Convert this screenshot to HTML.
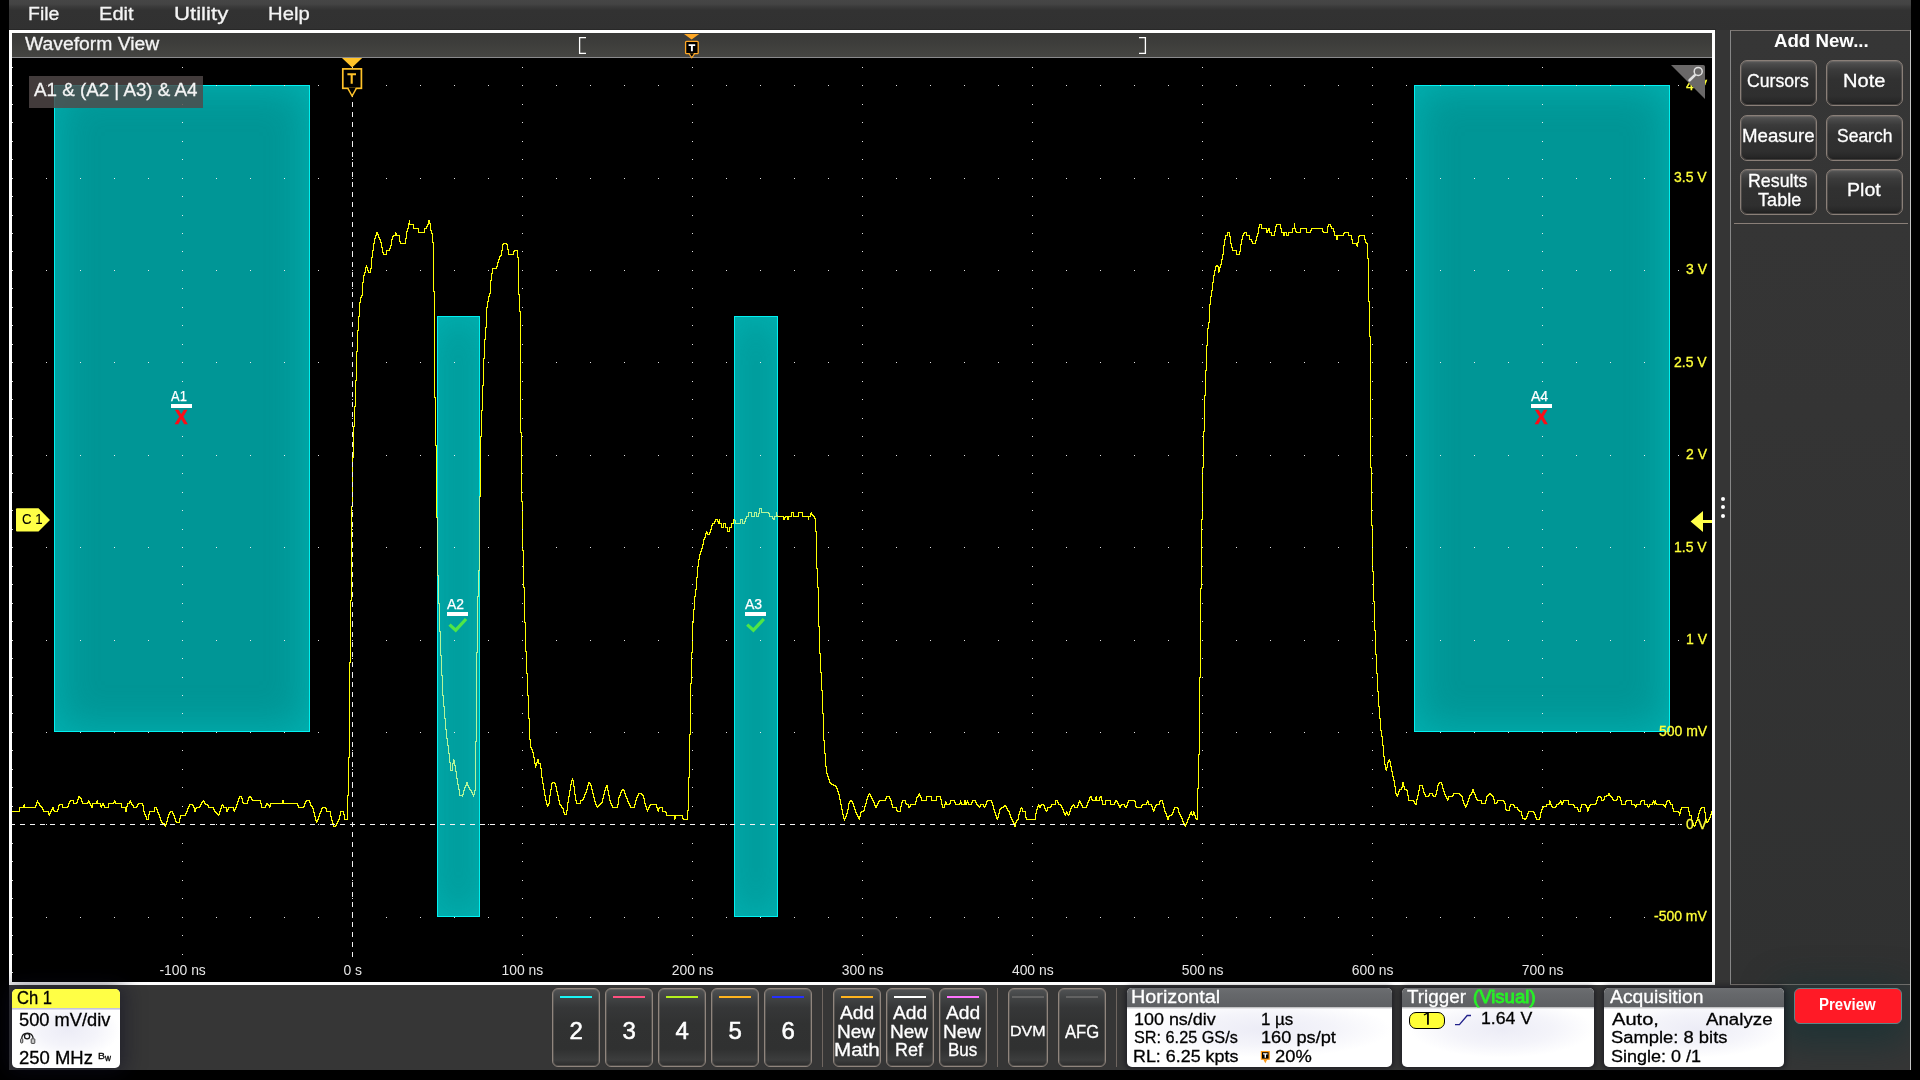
<!DOCTYPE html><html><head><meta charset="utf-8"><title>scope</title><style>
html,body{margin:0;padding:0;background:#000;}
body{width:1920px;height:1080px;position:relative;overflow:hidden;font-family:"Liberation Sans",sans-serif;}
.a{position:absolute;box-sizing:border-box;}
.t{position:absolute;white-space:nowrap;line-height:1;transform-origin:0 0;display:block;}
.btn{position:absolute;box-sizing:border-box;border:1px solid #8a7f78;border-radius:7px;box-shadow:inset 0 0 0 1px rgba(138,127,120,0.33);
 background:linear-gradient(180deg,#5c5c5c 0%,#4b4b4b 7%,#3b3b3b 20%,#313131 42%,#2f2f2f 80%,#272727 93%,#1c1c1c 100%);}
.cb{position:absolute;box-sizing:border-box;border:1px solid #90857d;border-radius:6px;box-shadow:inset 0 0 0 1px rgba(144,133,125,0.33);
 background:linear-gradient(180deg,#505254 0%,#434546 10%,#363738 24%,#313232 45%,#303131 78%,#3c3d3d 92%,#2c2c2c 100%);}
.badge{position:absolute;box-sizing:border-box;border-radius:5px;overflow:hidden;
 background:radial-gradient(ellipse 48% 36% at 52% 52%,#ececf6 0%,#f4f4fa 55%,#ffffff 100%);}
.bh{position:absolute;left:0;top:0;right:0;height:21px;background:linear-gradient(180deg,#6c6e71 0px,#66686b 6px,#5e6063 18.6px,#b8b8ba 19.2px,#e2e2e4 20.4px,#fafafc 21px);}
.rg{background:#009696;border:1px solid #00f2f2;box-shadow:inset 0 0 42px 0 rgba(0,240,240,0.34);}
.sep{position:absolute;width:1px;background:#6f6660;top:988px;height:79px;}
</style></head><body><div id="w" style="position:absolute;left:0;top:0;width:1920px;height:1080px;will-change:transform;">
<div class="a" style="left:9px;top:0;width:1902px;height:1070px;background:#353535;"></div>
<div class="a" style="left:9px;top:0;width:1902px;height:30px;background:linear-gradient(180deg,#464646 0px,#444444 4px,#3a3a3a 7px,#323232 10.5px,#313131 30px);"></div>
<div class="a" style="left:9px;top:29px;width:1707px;height:1px;background:#282828;"></div>
<span class="t" style="left:28.34px;top:5.00px;font-size:18.6px;color:#f4f4f4;-webkit-text-stroke:0.3px #f4f4f4;transform:scaleX(1.0464);">File</span>
<span class="t" style="left:99.19px;top:5.00px;font-size:18.6px;color:#f4f4f4;-webkit-text-stroke:0.3px #f4f4f4;transform:scaleX(1.0818);">Edit</span>
<span class="t" style="left:173.74px;top:5.00px;font-size:18.6px;color:#f4f4f4;-webkit-text-stroke:0.3px #f4f4f4;transform:scaleX(1.1932);">Utility</span>
<span class="t" style="left:267.98px;top:5.00px;font-size:18.6px;color:#f4f4f4;-webkit-text-stroke:0.3px #f4f4f4;transform:scaleX(1.0892);">Help</span>
<div class="a" style="left:9px;top:985px;width:1902px;height:85px;background:#363636;"></div>
<div class="a" style="left:1730px;top:30px;width:181px;height:955px;border:1px solid #7c7672;border-left-color:#878787;border-right:none;background:linear-gradient(180deg,#363636 0%,#343434 40%,#303131 100%);"></div>
<div class="a" style="left:1910px;top:30px;width:1px;height:1040px;background:#c4c4c4;"></div>
<div class="a" style="left:1734px;top:223px;width:174px;height:1px;background:#8a7f78;"></div>
<span class="t" style="left:1773.93px;top:32.00px;font-size:18.7px;color:#fff;font-weight:bold;">Add New...</span>
<div class="btn" style="left:1740px;top:60px;width:77px;height:46px;"></div>
<div class="btn" style="left:1826px;top:60px;width:77px;height:46px;"></div>
<div class="btn" style="left:1740px;top:115px;width:77px;height:46px;"></div>
<div class="btn" style="left:1826px;top:115px;width:77px;height:46px;"></div>
<div class="btn" style="left:1740px;top:169px;width:77px;height:46px;"></div>
<div class="btn" style="left:1826px;top:169px;width:77px;height:46px;"></div>
<span class="t" style="left:1747.42px;top:72.00px;font-size:18.5px;color:#fff;-webkit-text-stroke:0.3px #fff;transform:scaleX(0.9529);">Cursors</span>
<span class="t" style="left:1842.60px;top:72.00px;font-size:18.5px;color:#fff;-webkit-text-stroke:0.3px #fff;transform:scaleX(1.0838);">Note</span>
<span class="t" style="left:1741.81px;top:127.00px;font-size:18.5px;color:#fff;-webkit-text-stroke:0.3px #fff;transform:scaleX(1.0094);">Measure</span>
<span class="t" style="left:1836.61px;top:127.00px;font-size:18.5px;color:#fff;-webkit-text-stroke:0.3px #fff;transform:scaleX(0.9451);">Search</span>
<span class="t" style="left:1748.28px;top:172.00px;font-size:18.5px;color:#fff;-webkit-text-stroke:0.3px #fff;transform:scaleX(0.9619);">Results</span>
<span class="t" style="left:1757.64px;top:191.00px;font-size:18.5px;color:#fff;-webkit-text-stroke:0.3px #fff;transform:scaleX(0.9790);">Table</span>
<span class="t" style="left:1846.73px;top:181.00px;font-size:18.5px;color:#fff;-webkit-text-stroke:0.3px #fff;transform:scaleX(1.0580);">Plot</span>
<div class="a" style="left:1721px;top:496.9px;width:4.2px;height:4.2px;border-radius:50%;background:#fff;"></div>
<div class="a" style="left:1721px;top:505.29999999999995px;width:4.2px;height:4.2px;border-radius:50%;background:#fff;"></div>
<div class="a" style="left:1721px;top:513.9px;width:4.2px;height:4.2px;border-radius:50%;background:#fff;"></div>
<div class="a" style="left:9px;top:30px;width:1706px;height:955px;border:3px solid #fff;background:#000;"></div>
<div class="a" style="left:12px;top:33px;width:1700px;height:25px;background:linear-gradient(180deg,#3a3a38 0%,#3d3d3b 40%,#454542 100%);border-bottom:1px solid #8a8a8d;"></div>
<span class="t" style="left:25.00px;top:35.00px;font-size:18.7px;color:#f4f4f4;-webkit-text-stroke:0.3px #f4f4f4;transform:scaleX(1.0341);">Waveform View</span>
<svg class="a" style="left:0;top:0" width="1920" height="1080" viewBox="0 0 1920 1080"><defs><clipPath id="pc"><rect x="12" y="58" width="1700" height="924"/></clipPath><clipPath id="rc"><rect x="54" y="85" width="256" height="647"/><rect x="437" y="316" width="43" height="601"/><rect x="734" y="316" width="44" height="601"/><rect x="1414" y="85" width="256" height="647"/></clipPath><linearGradient id="gh" x1="0" x2="1" y1="0" y2="0"><stop offset="0" stop-color="#00adad"/><stop offset="0.10" stop-color="#009c9c"/><stop offset="0.5" stop-color="#009999"/><stop offset="0.90" stop-color="#009c9c"/><stop offset="1" stop-color="#00adad"/></linearGradient><linearGradient id="gn" x1="0" x2="1" y1="0" y2="0"><stop offset="0" stop-color="#00adad"/><stop offset="0.5" stop-color="#009e9e"/><stop offset="1" stop-color="#00adad"/></linearGradient></defs><g clip-path="url(#pc)"><defs><path id="wf" d="M11 811h1v1h-1zM12 811h1v1h-1zM13 811h1v1h-1zM14 811h1v1h-1zM15 811h1v1h-1zM16 811h1v1h-1zM17 811h1v1h-1zM18 811h1v1h-1zM19 807h1v5h-1zM20 807h1v1h-1zM21 807h1v1h-1zM22 807h1v1h-1zM23 805h1v3h-1zM24 804h1v4h-1zM25 807h1v1h-1zM26 807h1v1h-1zM27 807h1v1h-1zM28 807h1v1h-1zM29 807h1v1h-1zM30 807h1v1h-1zM31 807h1v1h-1zM32 807h1v1h-1zM33 807h1v1h-1zM34 807h1v1h-1zM35 805h1v3h-1zM36 802h1v4h-1zM37 800h1v3h-1zM38 802h1v2h-1zM39 803h1v3h-1zM40 805h1v2h-1zM41 806h1v2h-1zM42 807h1v3h-1zM43 809h1v3h-1zM44 811h1v1h-1zM45 811h1v1h-1zM46 811h1v1h-1zM47 811h1v1h-1zM48 811h1v4h-1zM49 813h1v3h-1zM50 811h1v3h-1zM51 809h1v3h-1zM52 807h1v3h-1zM53 807h1v4h-1zM54 810h1v2h-1zM55 811h1v1h-1zM56 811h1v1h-1zM57 809h1v3h-1zM58 805h1v5h-1zM59 804h1v2h-1zM60 804h1v1h-1zM61 804h1v1h-1zM62 804h1v4h-1zM63 807h1v1h-1zM64 807h1v1h-1zM65 807h1v1h-1zM66 807h1v1h-1zM67 806h1v2h-1zM68 803h1v4h-1zM69 801h1v3h-1zM70 800h1v2h-1zM71 800h1v1h-1zM72 800h1v1h-1zM73 800h1v4h-1zM74 803h1v1h-1zM75 803h1v1h-1zM76 802h1v2h-1zM77 799h1v4h-1zM78 796h1v4h-1zM79 796h1v2h-1zM80 797h1v2h-1zM81 798h1v4h-1zM82 801h1v3h-1zM83 803h1v1h-1zM84 803h1v1h-1zM85 803h1v1h-1zM86 803h1v1h-1zM87 802h1v2h-1zM88 800h1v3h-1zM89 801h1v3h-1zM90 803h1v3h-1zM91 805h1v3h-1zM92 803h1v5h-1zM93 803h1v1h-1zM94 803h1v1h-1zM95 803h1v1h-1zM96 801h1v3h-1zM97 800h1v4h-1zM98 803h1v1h-1zM99 803h1v1h-1zM100 803h1v4h-1zM101 805h1v3h-1zM102 803h1v3h-1zM103 803h1v3h-1zM104 805h1v3h-1zM105 807h1v1h-1zM106 807h1v1h-1zM107 807h1v1h-1zM108 803h1v5h-1zM109 803h1v1h-1zM110 803h1v1h-1zM111 803h1v1h-1zM112 803h1v1h-1zM113 802h1v2h-1zM114 800h1v3h-1zM115 801h1v3h-1zM116 803h1v1h-1zM117 803h1v1h-1zM118 803h1v1h-1zM119 803h1v1h-1zM120 803h1v1h-1zM121 803h1v5h-1zM122 807h1v1h-1zM123 807h1v1h-1zM124 807h1v1h-1zM125 807h1v5h-1zM126 806h1v6h-1zM127 803h1v4h-1zM128 803h1v1h-1zM129 801h1v3h-1zM130 800h1v3h-1zM131 802h1v3h-1zM132 804h1v2h-1zM133 805h1v3h-1zM134 807h1v1h-1zM135 807h1v1h-1zM136 806h1v2h-1zM137 804h1v3h-1zM138 803h1v2h-1zM139 803h1v1h-1zM140 803h1v1h-1zM141 803h1v1h-1zM142 803h1v3h-1zM143 805h1v7h-1zM144 811h1v4h-1zM145 814h1v3h-1zM146 816h1v4h-1zM147 819h1v1h-1zM148 814h1v6h-1zM149 811h1v4h-1zM150 811h1v1h-1zM151 811h1v1h-1zM152 811h1v1h-1zM153 811h1v1h-1zM154 807h1v5h-1zM155 807h1v1h-1zM156 807h1v3h-1zM157 809h1v4h-1zM158 812h1v3h-1zM159 814h1v4h-1zM160 817h1v4h-1zM161 820h1v3h-1zM162 822h1v2h-1zM163 823h1v1h-1zM164 823h1v3h-1zM165 824h1v3h-1zM166 821h1v4h-1zM167 817h1v5h-1zM168 814h1v4h-1zM169 812h1v3h-1zM170 811h1v2h-1zM171 811h1v1h-1zM172 811h1v3h-1zM173 813h1v3h-1zM174 815h1v4h-1zM175 818h1v4h-1zM176 821h1v2h-1zM177 822h1v1h-1zM178 822h1v1h-1zM179 818h1v5h-1zM180 815h1v4h-1zM181 815h1v1h-1zM182 815h1v1h-1zM183 815h1v1h-1zM184 815h1v1h-1zM185 813h1v3h-1zM186 811h1v3h-1zM187 808h1v4h-1zM188 806h1v3h-1zM189 804h1v3h-1zM190 804h1v1h-1zM191 804h1v1h-1zM192 804h1v2h-1zM193 805h1v3h-1zM194 807h1v5h-1zM195 808h1v4h-1zM196 807h1v2h-1zM197 807h1v1h-1zM198 807h1v1h-1zM199 806h1v2h-1zM200 804h1v3h-1zM201 802h1v3h-1zM202 801h1v2h-1zM203 800h1v2h-1zM204 801h1v3h-1zM205 803h1v2h-1zM206 804h1v1h-1zM207 804h1v2h-1zM208 805h1v3h-1zM209 807h1v1h-1zM210 807h1v1h-1zM211 807h1v1h-1zM212 807h1v1h-1zM213 807h1v3h-1zM214 809h1v3h-1zM215 811h1v2h-1zM216 812h1v2h-1zM217 813h1v2h-1zM218 814h1v2h-1zM219 811h1v4h-1zM220 808h1v4h-1zM221 805h1v4h-1zM222 804h1v2h-1zM223 805h1v3h-1zM224 807h1v1h-1zM225 807h1v1h-1zM226 807h1v5h-1zM227 809h1v3h-1zM228 807h1v3h-1zM229 807h1v1h-1zM230 807h1v1h-1zM231 807h1v1h-1zM232 807h1v1h-1zM233 807h1v4h-1zM234 809h1v3h-1zM235 807h1v3h-1zM236 804h1v4h-1zM237 801h1v4h-1zM238 798h1v4h-1zM239 796h1v3h-1zM240 796h1v1h-1zM241 796h1v3h-1zM242 798h1v5h-1zM243 802h1v2h-1zM244 803h1v1h-1zM245 803h1v1h-1zM246 803h1v1h-1zM247 800h1v4h-1zM248 797h1v4h-1zM249 796h1v2h-1zM250 796h1v2h-1zM251 797h1v3h-1zM252 799h1v2h-1zM253 800h1v1h-1zM254 800h1v1h-1zM255 800h1v1h-1zM256 800h1v1h-1zM257 800h1v1h-1zM258 800h1v1h-1zM259 800h1v1h-1zM260 800h1v4h-1zM261 803h1v5h-1zM262 807h1v1h-1zM263 807h1v1h-1zM264 807h1v1h-1zM265 805h1v3h-1zM266 803h1v3h-1zM267 803h1v2h-1zM268 804h1v2h-1zM269 805h1v3h-1zM270 803h1v4h-1zM271 803h1v1h-1zM272 803h1v1h-1zM273 803h1v1h-1zM274 803h1v1h-1zM275 803h1v1h-1zM276 803h1v1h-1zM277 803h1v1h-1zM278 803h1v1h-1zM279 803h1v1h-1zM280 803h1v1h-1zM281 803h1v1h-1zM282 800h1v4h-1zM283 800h1v4h-1zM284 803h1v1h-1zM285 803h1v1h-1zM286 803h1v1h-1zM287 803h1v1h-1zM288 803h1v1h-1zM289 803h1v1h-1zM290 803h1v1h-1zM291 803h1v1h-1zM292 803h1v1h-1zM293 803h1v1h-1zM294 803h1v1h-1zM295 803h1v1h-1zM296 803h1v1h-1zM297 803h1v3h-1zM298 805h1v3h-1zM299 807h1v1h-1zM300 807h1v1h-1zM301 807h1v1h-1zM302 807h1v1h-1zM303 806h1v2h-1zM304 803h1v4h-1zM305 801h1v3h-1zM306 800h1v2h-1zM307 800h1v1h-1zM308 800h1v1h-1zM309 800h1v3h-1zM310 802h1v4h-1zM311 805h1v2h-1zM312 806h1v3h-1zM313 808h1v5h-1zM314 812h1v5h-1zM315 816h1v5h-1zM316 820h1v3h-1zM317 819h1v3h-1zM318 816h1v4h-1zM319 813h1v4h-1zM320 811h1v3h-1zM321 808h1v4h-1zM322 807h1v2h-1zM323 807h1v1h-1zM324 807h1v1h-1zM325 807h1v2h-1zM326 808h1v4h-1zM327 811h1v1h-1zM328 811h1v1h-1zM329 811h1v1h-1zM330 811h1v6h-1zM331 816h1v5h-1zM332 820h1v4h-1zM333 823h1v4h-1zM334 826h1v1h-1zM335 825h1v2h-1zM336 823h1v3h-1zM337 821h1v3h-1zM338 819h1v3h-1zM339 815h1v5h-1zM340 811h1v5h-1zM341 811h1v1h-1zM342 811h1v1h-1zM343 811h1v4h-1zM344 814h1v6h-1zM345 819h1v1h-1zM346 819h1v1h-1zM347 795h1v25h-1zM348 757h1v39h-1zM349 662h1v96h-1zM350 600h1v63h-1zM351 506h1v95h-1zM352 457h1v50h-1zM353 426h1v32h-1zM354 406h1v21h-1zM355 380h1v27h-1zM356 351h1v30h-1zM357 330h1v22h-1zM358 316h1v15h-1zM359 302h1v15h-1zM360 297h1v6h-1zM361 295h1v3h-1zM362 282h1v14h-1zM363 275h1v8h-1zM364 272h1v4h-1zM365 267h1v6h-1zM366 265h1v3h-1zM367 267h1v4h-1zM368 270h1v3h-1zM369 272h1v1h-1zM370 268h1v5h-1zM371 257h1v12h-1zM372 250h1v8h-1zM373 243h1v8h-1zM374 238h1v6h-1zM375 235h1v4h-1zM376 232h1v4h-1zM377 232h1v3h-1zM378 234h1v4h-1zM379 237h1v3h-1zM380 239h1v4h-1zM381 242h1v6h-1zM382 247h1v6h-1zM383 252h1v3h-1zM384 254h1v1h-1zM385 254h1v1h-1zM386 250h1v5h-1zM387 250h1v1h-1zM388 250h1v1h-1zM389 248h1v3h-1zM390 245h1v4h-1zM391 239h1v7h-1zM392 236h1v4h-1zM393 235h1v2h-1zM394 235h1v1h-1zM395 232h1v4h-1zM396 233h1v3h-1zM397 235h1v1h-1zM398 235h1v1h-1zM399 235h1v7h-1zM400 241h1v3h-1zM401 243h1v1h-1zM402 243h1v1h-1zM403 243h1v1h-1zM404 243h1v1h-1zM405 238h1v6h-1zM406 231h1v8h-1zM407 228h1v4h-1zM408 223h1v6h-1zM409 220h1v5h-1zM410 224h1v1h-1zM411 224h1v1h-1zM412 224h1v1h-1zM413 224h1v5h-1zM414 228h1v1h-1zM415 228h1v1h-1zM416 228h1v1h-1zM417 228h1v1h-1zM418 228h1v5h-1zM419 232h1v1h-1zM420 232h1v1h-1zM421 232h1v1h-1zM422 232h1v1h-1zM423 232h1v1h-1zM424 228h1v5h-1zM425 228h1v1h-1zM426 226h1v3h-1zM427 224h1v3h-1zM428 220h1v5h-1zM429 220h1v4h-1zM430 223h1v8h-1zM431 230h1v4h-1zM432 233h1v10h-1zM433 242h1v50h-1zM434 291h1v107h-1zM435 397h1v49h-1zM436 445h1v73h-1zM437 517h1v59h-1zM438 575h1v29h-1zM439 603h1v29h-1zM440 631h1v25h-1zM441 655h1v21h-1zM442 675h1v21h-1zM443 695h1v12h-1zM444 706h1v13h-1zM445 718h1v12h-1zM446 729h1v10h-1zM447 738h1v8h-1zM448 745h1v9h-1zM449 753h1v10h-1zM450 762h1v9h-1zM451 770h1v1h-1zM452 763h1v8h-1zM453 759h1v5h-1zM454 760h1v6h-1zM455 765h1v7h-1zM456 771h1v8h-1zM457 778h1v7h-1zM458 784h1v6h-1zM459 789h1v7h-1zM460 795h1v1h-1zM461 795h1v1h-1zM462 794h1v3h-1zM463 790h1v5h-1zM464 787h1v4h-1zM465 785h1v3h-1zM466 782h1v4h-1zM467 782h1v4h-1zM468 785h1v3h-1zM469 787h1v3h-1zM470 789h1v2h-1zM471 790h1v3h-1zM472 792h1v3h-1zM473 794h1v3h-1zM474 790h1v5h-1zM475 741h1v50h-1zM476 652h1v90h-1zM477 596h1v57h-1zM478 570h1v27h-1zM479 496h1v75h-1zM480 436h1v61h-1zM481 410h1v27h-1zM482 385h1v26h-1zM483 358h1v28h-1zM484 339h1v20h-1zM485 327h1v13h-1zM486 307h1v21h-1zM487 301h1v7h-1zM488 296h1v6h-1zM489 293h1v4h-1zM490 280h1v14h-1zM491 273h1v8h-1zM492 268h1v6h-1zM493 268h1v1h-1zM494 268h1v1h-1zM495 268h1v1h-1zM496 266h1v3h-1zM497 262h1v5h-1zM498 259h1v4h-1zM499 256h1v4h-1zM500 255h1v2h-1zM501 250h1v6h-1zM502 244h1v7h-1zM503 243h1v2h-1zM504 243h1v1h-1zM505 243h1v1h-1zM506 243h1v2h-1zM507 244h1v6h-1zM508 249h1v6h-1zM509 254h1v1h-1zM510 254h1v1h-1zM511 254h1v1h-1zM512 254h1v1h-1zM513 251h1v4h-1zM514 250h1v2h-1zM515 250h1v1h-1zM516 250h1v1h-1zM517 250h1v8h-1zM518 257h1v38h-1zM519 294h1v18h-1zM520 311h1v122h-1zM521 432h1v70h-1zM522 501h1v50h-1zM523 550h1v38h-1zM524 587h1v36h-1zM525 622h1v30h-1zM526 651h1v23h-1zM527 673h1v23h-1zM528 695h1v24h-1zM529 718h1v22h-1zM530 739h1v9h-1zM531 747h1v3h-1zM532 749h1v4h-1zM533 752h1v6h-1zM534 757h1v7h-1zM535 763h1v5h-1zM536 762h1v4h-1zM537 759h1v4h-1zM538 759h1v5h-1zM539 763h1v1h-1zM540 763h1v6h-1zM541 768h1v10h-1zM542 777h1v7h-1zM543 783h1v7h-1zM544 789h1v7h-1zM545 795h1v6h-1zM546 800h1v5h-1zM547 804h1v3h-1zM548 803h1v3h-1zM549 795h1v9h-1zM550 789h1v7h-1zM551 783h1v7h-1zM552 782h1v2h-1zM553 782h1v1h-1zM554 782h1v2h-1zM555 783h1v4h-1zM556 786h1v6h-1zM557 791h1v5h-1zM558 795h1v6h-1zM559 800h1v5h-1zM560 804h1v2h-1zM561 805h1v3h-1zM562 807h1v2h-1zM563 808h1v5h-1zM564 812h1v3h-1zM565 814h1v1h-1zM566 810h1v5h-1zM567 802h1v9h-1zM568 796h1v7h-1zM569 790h1v7h-1zM570 784h1v7h-1zM571 780h1v5h-1zM572 778h1v3h-1zM573 780h1v7h-1zM574 786h1v9h-1zM575 794h1v7h-1zM576 800h1v4h-1zM577 803h1v1h-1zM578 803h1v1h-1zM579 803h1v1h-1zM580 800h1v4h-1zM581 800h1v1h-1zM582 799h1v2h-1zM583 797h1v3h-1zM584 794h1v4h-1zM585 792h1v3h-1zM586 789h1v4h-1zM587 785h1v5h-1zM588 782h1v4h-1zM589 782h1v2h-1zM590 783h1v3h-1zM591 785h1v5h-1zM592 789h1v5h-1zM593 793h1v5h-1zM594 797h1v5h-1zM595 801h1v4h-1zM596 804h1v3h-1zM597 806h1v2h-1zM598 805h1v2h-1zM599 804h1v2h-1zM600 803h1v2h-1zM601 802h1v2h-1zM602 798h1v5h-1zM603 794h1v5h-1zM604 790h1v5h-1zM605 787h1v4h-1zM606 785h1v3h-1zM607 785h1v6h-1zM608 790h1v6h-1zM609 795h1v6h-1zM610 800h1v4h-1zM611 803h1v3h-1zM612 805h1v3h-1zM613 807h1v1h-1zM614 807h1v1h-1zM615 807h1v1h-1zM616 807h1v1h-1zM617 804h1v4h-1zM618 797h1v8h-1zM619 795h1v3h-1zM620 792h1v4h-1zM621 790h1v3h-1zM622 789h1v2h-1zM623 789h1v2h-1zM624 790h1v4h-1zM625 793h1v4h-1zM626 796h1v3h-1zM627 798h1v4h-1zM628 801h1v3h-1zM629 803h1v3h-1zM630 805h1v3h-1zM631 807h1v1h-1zM632 807h1v1h-1zM633 807h1v1h-1zM634 804h1v4h-1zM635 800h1v5h-1zM636 797h1v4h-1zM637 795h1v3h-1zM638 793h1v3h-1zM639 793h1v1h-1zM640 793h1v1h-1zM641 793h1v2h-1zM642 794h1v2h-1zM643 795h1v4h-1zM644 798h1v6h-1zM645 803h1v4h-1zM646 806h1v4h-1zM647 809h1v3h-1zM648 807h1v3h-1zM649 805h1v3h-1zM650 804h1v2h-1zM651 804h1v1h-1zM652 804h1v1h-1zM653 804h1v1h-1zM654 804h1v1h-1zM655 804h1v1h-1zM656 804h1v4h-1zM657 807h1v4h-1zM658 808h1v4h-1zM659 807h1v2h-1zM660 807h1v1h-1zM661 807h1v1h-1zM662 807h1v5h-1zM663 811h1v1h-1zM664 811h1v1h-1zM665 811h1v2h-1zM666 812h1v4h-1zM667 815h1v1h-1zM668 815h1v1h-1zM669 815h1v1h-1zM670 815h1v1h-1zM671 815h1v1h-1zM672 815h1v1h-1zM673 815h1v1h-1zM674 815h1v5h-1zM675 815h1v4h-1zM676 815h1v1h-1zM677 815h1v1h-1zM678 815h1v1h-1zM679 815h1v1h-1zM680 815h1v1h-1zM681 815h1v1h-1zM682 815h1v4h-1zM683 818h1v2h-1zM684 819h1v1h-1zM685 819h1v1h-1zM686 819h1v1h-1zM687 810h1v10h-1zM688 777h1v34h-1zM689 734h1v44h-1zM690 683h1v52h-1zM691 652h1v32h-1zM692 622h1v31h-1zM693 609h1v14h-1zM694 596h1v14h-1zM695 589h1v8h-1zM696 577h1v13h-1zM697 566h1v12h-1zM698 559h1v8h-1zM699 554h1v6h-1zM700 551h1v4h-1zM701 548h1v4h-1zM702 544h1v5h-1zM703 539h1v6h-1zM704 537h1v3h-1zM705 533h1v5h-1zM706 531h1v3h-1zM707 532h1v3h-1zM708 534h1v1h-1zM709 532h1v3h-1zM710 529h1v4h-1zM711 525h1v5h-1zM712 523h1v3h-1zM713 523h1v1h-1zM714 521h1v3h-1zM715 519h1v3h-1zM716 519h1v1h-1zM717 519h1v3h-1zM718 521h1v3h-1zM719 519h1v5h-1zM720 523h1v1h-1zM721 523h1v5h-1zM722 527h1v1h-1zM723 523h1v5h-1zM724 523h1v1h-1zM725 523h1v5h-1zM726 527h1v1h-1zM727 527h1v5h-1zM728 531h1v1h-1zM729 527h1v5h-1zM730 527h1v1h-1zM731 523h1v5h-1zM732 523h1v1h-1zM733 519h1v5h-1zM734 519h1v2h-1zM735 520h1v4h-1zM736 523h1v1h-1zM737 523h1v1h-1zM738 523h1v1h-1zM739 523h1v1h-1zM740 519h1v5h-1zM741 519h1v1h-1zM742 519h1v5h-1zM743 523h1v1h-1zM744 521h1v3h-1zM745 518h1v4h-1zM746 516h1v3h-1zM747 516h1v1h-1zM748 512h1v5h-1zM749 512h1v1h-1zM750 512h1v1h-1zM751 512h1v5h-1zM752 516h1v1h-1zM753 516h1v1h-1zM754 512h1v5h-1zM755 512h1v1h-1zM756 512h1v5h-1zM757 516h1v1h-1zM758 513h1v4h-1zM759 508h1v6h-1zM760 508h1v1h-1zM761 508h1v5h-1zM762 512h1v1h-1zM763 512h1v1h-1zM764 512h1v1h-1zM765 512h1v1h-1zM766 512h1v1h-1zM767 512h1v1h-1zM768 512h1v2h-1zM769 513h1v4h-1zM770 516h1v1h-1zM771 516h1v1h-1zM772 516h1v3h-1zM773 518h1v2h-1zM774 516h1v4h-1zM775 516h1v1h-1zM776 512h1v5h-1zM777 515h1v2h-1zM778 516h1v1h-1zM779 516h1v1h-1zM780 516h1v1h-1zM781 516h1v1h-1zM782 516h1v1h-1zM783 516h1v4h-1zM784 517h1v3h-1zM785 516h1v2h-1zM786 516h1v1h-1zM787 516h1v4h-1zM788 516h1v4h-1zM789 516h1v1h-1zM790 516h1v1h-1zM791 512h1v5h-1zM792 512h1v1h-1zM793 512h1v5h-1zM794 516h1v1h-1zM795 516h1v1h-1zM796 516h1v1h-1zM797 516h1v1h-1zM798 512h1v5h-1zM799 512h1v1h-1zM800 512h1v1h-1zM801 512h1v1h-1zM802 512h1v5h-1zM803 516h1v1h-1zM804 516h1v1h-1zM805 516h1v1h-1zM806 516h1v1h-1zM807 516h1v1h-1zM808 516h1v4h-1zM809 516h1v1h-1zM810 513h1v4h-1zM811 512h1v3h-1zM812 514h1v2h-1zM813 515h1v2h-1zM814 516h1v3h-1zM815 518h1v14h-1zM816 531h1v38h-1zM817 568h1v20h-1zM818 587h1v40h-1zM819 626h1v28h-1zM820 653h1v20h-1zM821 672h1v19h-1zM822 690h1v24h-1zM823 713h1v28h-1zM824 740h1v14h-1zM825 753h1v14h-1zM826 766h1v8h-1zM827 773h1v4h-1zM828 776h1v4h-1zM829 779h1v4h-1zM830 782h1v2h-1zM831 783h1v2h-1zM832 784h1v1h-1zM833 784h1v2h-1zM834 785h1v1h-1zM835 785h1v2h-1zM836 786h1v3h-1zM837 788h1v4h-1zM838 791h1v4h-1zM839 794h1v6h-1zM840 799h1v6h-1zM841 804h1v6h-1zM842 809h1v6h-1zM843 814h1v5h-1zM844 818h1v3h-1zM845 816h1v3h-1zM846 813h1v4h-1zM847 809h1v5h-1zM848 803h1v7h-1zM849 801h1v3h-1zM850 800h1v2h-1zM851 800h1v2h-1zM852 801h1v3h-1zM853 803h1v4h-1zM854 806h1v4h-1zM855 809h1v4h-1zM856 812h1v3h-1zM857 814h1v3h-1zM858 816h1v3h-1zM859 816h1v4h-1zM860 812h1v5h-1zM861 811h1v2h-1zM862 811h1v1h-1zM863 810h1v2h-1zM864 806h1v5h-1zM865 803h1v4h-1zM866 799h1v5h-1zM867 796h1v4h-1zM868 794h1v3h-1zM869 793h1v2h-1zM870 794h1v3h-1zM871 796h1v3h-1zM872 798h1v3h-1zM873 800h1v3h-1zM874 802h1v4h-1zM875 805h1v3h-1zM876 805h1v3h-1zM877 803h1v3h-1zM878 801h1v3h-1zM879 800h1v2h-1zM880 800h1v1h-1zM881 800h1v1h-1zM882 800h1v1h-1zM883 800h1v1h-1zM884 800h1v1h-1zM885 798h1v3h-1zM886 796h1v3h-1zM887 796h1v1h-1zM888 796h1v1h-1zM889 796h1v3h-1zM890 798h1v3h-1zM891 800h1v5h-1zM892 804h1v4h-1zM893 807h1v1h-1zM894 807h1v1h-1zM895 807h1v1h-1zM896 807h1v4h-1zM897 810h1v2h-1zM898 811h1v1h-1zM899 811h1v1h-1zM900 806h1v6h-1zM901 802h1v5h-1zM902 800h1v3h-1zM903 800h1v1h-1zM904 800h1v1h-1zM905 800h1v4h-1zM906 803h1v2h-1zM907 804h1v1h-1zM908 804h1v4h-1zM909 806h1v2h-1zM910 804h1v3h-1zM911 804h1v1h-1zM912 804h1v1h-1zM913 804h1v1h-1zM914 804h1v1h-1zM915 801h1v4h-1zM916 797h1v5h-1zM917 796h1v2h-1zM918 794h1v3h-1zM919 793h1v3h-1zM920 795h1v3h-1zM921 797h1v4h-1zM922 800h1v1h-1zM923 800h1v1h-1zM924 800h1v1h-1zM925 800h1v1h-1zM926 796h1v5h-1zM927 796h1v1h-1zM928 796h1v1h-1zM929 796h1v1h-1zM930 796h1v1h-1zM931 796h1v5h-1zM932 800h1v1h-1zM933 800h1v1h-1zM934 800h1v1h-1zM935 800h1v1h-1zM936 796h1v5h-1zM937 796h1v1h-1zM938 796h1v1h-1zM939 796h1v1h-1zM940 796h1v4h-1zM941 799h1v6h-1zM942 804h1v4h-1zM943 807h1v1h-1zM944 804h1v4h-1zM945 801h1v4h-1zM946 802h1v3h-1zM947 804h1v1h-1zM948 804h1v1h-1zM949 803h1v2h-1zM950 800h1v4h-1zM951 800h1v1h-1zM952 800h1v1h-1zM953 800h1v1h-1zM954 800h1v3h-1zM955 802h1v3h-1zM956 804h1v1h-1zM957 804h1v1h-1zM958 804h1v1h-1zM959 803h1v2h-1zM960 800h1v4h-1zM961 802h1v3h-1zM962 804h1v1h-1zM963 804h1v1h-1zM964 800h1v5h-1zM965 800h1v5h-1zM966 802h1v3h-1zM967 800h1v3h-1zM968 802h1v3h-1zM969 804h1v1h-1zM970 804h1v1h-1zM971 802h1v3h-1zM972 800h1v3h-1zM973 800h1v1h-1zM974 800h1v1h-1zM975 800h1v3h-1zM976 802h1v3h-1zM977 804h1v2h-1zM978 805h1v2h-1zM979 806h1v2h-1zM980 804h1v3h-1zM981 804h1v1h-1zM982 804h1v1h-1zM983 804h1v3h-1zM984 806h1v2h-1zM985 804h1v3h-1zM986 801h1v4h-1zM987 800h1v2h-1zM988 800h1v1h-1zM989 800h1v1h-1zM990 800h1v1h-1zM991 800h1v3h-1zM992 802h1v4h-1zM993 805h1v5h-1zM994 809h1v4h-1zM995 812h1v4h-1zM996 815h1v4h-1zM997 817h1v3h-1zM998 813h1v5h-1zM999 809h1v5h-1zM1000 808h1v2h-1zM1001 807h1v2h-1zM1002 807h1v1h-1zM1003 806h1v2h-1zM1004 805h1v2h-1zM1005 805h1v2h-1zM1006 806h1v3h-1zM1007 808h1v3h-1zM1008 810h1v2h-1zM1009 811h1v4h-1zM1010 814h1v4h-1zM1011 817h1v3h-1zM1012 819h1v3h-1zM1013 821h1v3h-1zM1014 823h1v4h-1zM1015 822h1v5h-1zM1016 820h1v3h-1zM1017 819h1v2h-1zM1018 814h1v6h-1zM1019 811h1v4h-1zM1020 808h1v4h-1zM1021 807h1v2h-1zM1022 808h1v4h-1zM1023 811h1v1h-1zM1024 811h1v1h-1zM1025 811h1v7h-1zM1026 817h1v3h-1zM1027 819h1v1h-1zM1028 819h1v1h-1zM1029 819h1v1h-1zM1030 819h1v1h-1zM1031 819h1v1h-1zM1032 819h1v1h-1zM1033 819h1v1h-1zM1034 819h1v1h-1zM1035 813h1v7h-1zM1036 809h1v5h-1zM1037 806h1v4h-1zM1038 804h1v3h-1zM1039 805h1v3h-1zM1040 805h1v3h-1zM1041 804h1v2h-1zM1042 804h1v1h-1zM1043 804h1v2h-1zM1044 805h1v4h-1zM1045 808h1v3h-1zM1046 810h1v2h-1zM1047 807h1v4h-1zM1048 807h1v1h-1zM1049 807h1v1h-1zM1050 806h1v2h-1zM1051 804h1v3h-1zM1052 804h1v1h-1zM1053 804h1v1h-1zM1054 804h1v1h-1zM1055 800h1v5h-1zM1056 800h1v1h-1zM1057 800h1v3h-1zM1058 802h1v3h-1zM1059 804h1v1h-1zM1060 804h1v2h-1zM1061 805h1v3h-1zM1062 807h1v3h-1zM1063 809h1v4h-1zM1064 812h1v3h-1zM1065 813h1v3h-1zM1066 811h1v3h-1zM1067 812h1v3h-1zM1068 814h1v2h-1zM1069 811h1v4h-1zM1070 808h1v4h-1zM1071 806h1v3h-1zM1072 805h1v2h-1zM1073 804h1v2h-1zM1074 805h1v3h-1zM1075 807h1v1h-1zM1076 807h1v1h-1zM1077 805h1v3h-1zM1078 802h1v4h-1zM1079 800h1v3h-1zM1080 801h1v3h-1zM1081 803h1v3h-1zM1082 805h1v3h-1zM1083 807h1v1h-1zM1084 807h1v1h-1zM1085 807h1v1h-1zM1086 805h1v3h-1zM1087 802h1v4h-1zM1088 800h1v3h-1zM1089 797h1v4h-1zM1090 796h1v2h-1zM1091 796h1v4h-1zM1092 799h1v2h-1zM1093 800h1v1h-1zM1094 800h1v1h-1zM1095 797h1v4h-1zM1096 796h1v5h-1zM1097 800h1v1h-1zM1098 800h1v1h-1zM1099 797h1v4h-1zM1100 796h1v2h-1zM1101 796h1v5h-1zM1102 800h1v5h-1zM1103 804h1v1h-1zM1104 804h1v1h-1zM1105 800h1v5h-1zM1106 800h1v1h-1zM1107 800h1v1h-1zM1108 800h1v1h-1zM1109 800h1v1h-1zM1110 800h1v5h-1zM1111 804h1v1h-1zM1112 804h1v1h-1zM1113 804h1v1h-1zM1114 802h1v3h-1zM1115 800h1v3h-1zM1116 800h1v2h-1zM1117 801h1v3h-1zM1118 803h1v3h-1zM1119 805h1v3h-1zM1120 805h1v3h-1zM1121 804h1v2h-1zM1122 804h1v1h-1zM1123 804h1v1h-1zM1124 804h1v3h-1zM1125 806h1v2h-1zM1126 805h1v3h-1zM1127 802h1v4h-1zM1128 800h1v3h-1zM1129 800h1v1h-1zM1130 800h1v1h-1zM1131 800h1v1h-1zM1132 800h1v1h-1zM1133 800h1v1h-1zM1134 800h1v2h-1zM1135 801h1v6h-1zM1136 806h1v2h-1zM1137 807h1v1h-1zM1138 807h1v1h-1zM1139 807h1v1h-1zM1140 807h1v1h-1zM1141 805h1v3h-1zM1142 804h1v2h-1zM1143 804h1v1h-1zM1144 804h1v1h-1zM1145 804h1v1h-1zM1146 802h1v3h-1zM1147 800h1v3h-1zM1148 801h1v4h-1zM1149 804h1v1h-1zM1150 804h1v1h-1zM1151 804h1v3h-1zM1152 806h1v4h-1zM1153 809h1v3h-1zM1154 807h1v4h-1zM1155 805h1v3h-1zM1156 804h1v2h-1zM1157 804h1v1h-1zM1158 804h1v1h-1zM1159 801h1v4h-1zM1160 800h1v2h-1zM1161 800h1v1h-1zM1162 800h1v4h-1zM1163 803h1v5h-1zM1164 807h1v5h-1zM1165 811h1v3h-1zM1166 813h1v4h-1zM1167 816h1v4h-1zM1168 816h1v4h-1zM1169 815h1v2h-1zM1170 815h1v1h-1zM1171 814h1v2h-1zM1172 812h1v3h-1zM1173 809h1v4h-1zM1174 807h1v3h-1zM1175 807h1v1h-1zM1176 807h1v1h-1zM1177 807h1v2h-1zM1178 808h1v5h-1zM1179 812h1v3h-1zM1180 814h1v3h-1zM1181 816h1v3h-1zM1182 818h1v4h-1zM1183 821h1v3h-1zM1184 823h1v3h-1zM1185 824h1v3h-1zM1186 822h1v3h-1zM1187 819h1v4h-1zM1188 817h1v3h-1zM1189 814h1v4h-1zM1190 812h1v3h-1zM1191 811h1v4h-1zM1192 814h1v2h-1zM1193 811h1v4h-1zM1194 812h1v4h-1zM1195 815h1v4h-1zM1196 818h1v2h-1zM1197 788h1v32h-1zM1198 754h1v35h-1zM1199 677h1v78h-1zM1200 588h1v90h-1zM1201 519h1v70h-1zM1202 467h1v53h-1zM1203 431h1v37h-1zM1204 395h1v37h-1zM1205 370h1v26h-1zM1206 345h1v26h-1zM1207 328h1v18h-1zM1208 322h1v7h-1zM1209 304h1v19h-1zM1210 296h1v9h-1zM1211 290h1v7h-1zM1212 282h1v9h-1zM1213 275h1v8h-1zM1214 270h1v6h-1zM1215 266h1v5h-1zM1216 265h1v2h-1zM1217 265h1v2h-1zM1218 266h1v7h-1zM1219 267h1v5h-1zM1220 264h1v4h-1zM1221 259h1v6h-1zM1222 254h1v6h-1zM1223 245h1v10h-1zM1224 239h1v7h-1zM1225 235h1v5h-1zM1226 235h1v1h-1zM1227 232h1v4h-1zM1228 232h1v1h-1zM1229 232h1v5h-1zM1230 236h1v8h-1zM1231 243h1v5h-1zM1232 247h1v4h-1zM1233 250h1v1h-1zM1234 250h1v1h-1zM1235 250h1v1h-1zM1236 250h1v5h-1zM1237 254h1v1h-1zM1238 254h1v1h-1zM1239 251h1v4h-1zM1240 244h1v8h-1zM1241 239h1v6h-1zM1242 235h1v5h-1zM1243 233h1v3h-1zM1244 232h1v2h-1zM1245 232h1v1h-1zM1246 232h1v4h-1zM1247 235h1v1h-1zM1248 235h1v1h-1zM1249 235h1v5h-1zM1250 239h1v1h-1zM1251 239h1v3h-1zM1252 241h1v3h-1zM1253 243h1v1h-1zM1254 243h1v1h-1zM1255 240h1v4h-1zM1256 236h1v5h-1zM1257 233h1v4h-1zM1258 227h1v7h-1zM1259 224h1v4h-1zM1260 224h1v1h-1zM1261 224h1v5h-1zM1262 228h1v1h-1zM1263 228h1v1h-1zM1264 228h1v1h-1zM1265 228h1v1h-1zM1266 228h1v5h-1zM1267 230h1v3h-1zM1268 228h1v3h-1zM1269 228h1v5h-1zM1270 232h1v1h-1zM1271 232h1v4h-1zM1272 235h1v1h-1zM1273 235h1v1h-1zM1274 231h1v5h-1zM1275 226h1v6h-1zM1276 224h1v3h-1zM1277 224h1v1h-1zM1278 224h1v1h-1zM1279 224h1v1h-1zM1280 224h1v5h-1zM1281 228h1v5h-1zM1282 232h1v1h-1zM1283 232h1v4h-1zM1284 232h1v4h-1zM1285 232h1v1h-1zM1286 232h1v4h-1zM1287 235h1v1h-1zM1288 232h1v4h-1zM1289 232h1v1h-1zM1290 232h1v1h-1zM1291 232h1v1h-1zM1292 228h1v5h-1zM1293 228h1v1h-1zM1294 223h1v6h-1zM1295 228h1v4h-1zM1296 231h1v2h-1zM1297 232h1v1h-1zM1298 232h1v1h-1zM1299 232h1v1h-1zM1300 228h1v5h-1zM1301 228h1v1h-1zM1302 228h1v1h-1zM1303 228h1v1h-1zM1304 228h1v1h-1zM1305 228h1v1h-1zM1306 228h1v5h-1zM1307 232h1v1h-1zM1308 232h1v1h-1zM1309 232h1v1h-1zM1310 230h1v3h-1zM1311 228h1v3h-1zM1312 228h1v1h-1zM1313 228h1v1h-1zM1314 228h1v1h-1zM1315 228h1v1h-1zM1316 228h1v1h-1zM1317 228h1v1h-1zM1318 228h1v1h-1zM1319 228h1v1h-1zM1320 228h1v1h-1zM1321 228h1v1h-1zM1322 228h1v4h-1zM1323 231h1v2h-1zM1324 232h1v1h-1zM1325 232h1v1h-1zM1326 232h1v1h-1zM1327 226h1v7h-1zM1328 224h1v3h-1zM1329 224h1v1h-1zM1330 224h1v3h-1zM1331 226h1v3h-1zM1332 228h1v1h-1zM1333 228h1v4h-1zM1334 231h1v5h-1zM1335 235h1v1h-1zM1336 235h1v5h-1zM1337 235h1v5h-1zM1338 235h1v1h-1zM1339 235h1v1h-1zM1340 235h1v1h-1zM1341 235h1v1h-1zM1342 235h1v1h-1zM1343 233h1v3h-1zM1344 232h1v2h-1zM1345 232h1v1h-1zM1346 232h1v1h-1zM1347 232h1v1h-1zM1348 232h1v4h-1zM1349 235h1v1h-1zM1350 235h1v1h-1zM1351 235h1v5h-1zM1352 239h1v5h-1zM1353 243h1v1h-1zM1354 243h1v1h-1zM1355 243h1v1h-1zM1356 243h1v3h-1zM1357 242h1v5h-1zM1358 236h1v7h-1zM1359 235h1v2h-1zM1360 235h1v1h-1zM1361 235h1v1h-1zM1362 235h1v1h-1zM1363 235h1v1h-1zM1364 235h1v5h-1zM1365 239h1v4h-1zM1366 242h1v2h-1zM1367 243h1v16h-1zM1368 258h1v44h-1zM1369 301h1v36h-1zM1370 336h1v132h-1zM1371 467h1v59h-1zM1372 525h1v47h-1zM1373 571h1v31h-1zM1374 601h1v30h-1zM1375 630h1v25h-1zM1376 654h1v20h-1zM1377 673h1v19h-1zM1378 691h1v16h-1zM1379 706h1v13h-1zM1380 718h1v13h-1zM1381 730h1v7h-1zM1382 736h1v10h-1zM1383 745h1v12h-1zM1384 756h1v9h-1zM1385 764h1v6h-1zM1386 767h1v4h-1zM1387 762h1v6h-1zM1388 760h1v3h-1zM1389 759h1v3h-1zM1390 761h1v6h-1zM1391 766h1v6h-1zM1392 771h1v6h-1zM1393 776h1v5h-1zM1394 780h1v7h-1zM1395 786h1v8h-1zM1396 793h1v3h-1zM1397 794h1v3h-1zM1398 791h1v4h-1zM1399 789h1v3h-1zM1400 789h1v1h-1zM1401 787h1v3h-1zM1402 782h1v6h-1zM1403 782h1v5h-1zM1404 786h1v4h-1zM1405 789h1v1h-1zM1406 789h1v2h-1zM1407 790h1v6h-1zM1408 795h1v6h-1zM1409 800h1v1h-1zM1410 800h1v1h-1zM1411 800h1v1h-1zM1412 800h1v1h-1zM1413 800h1v2h-1zM1414 801h1v3h-1zM1415 803h1v2h-1zM1416 799h1v6h-1zM1417 795h1v5h-1zM1418 790h1v6h-1zM1419 785h1v6h-1zM1420 785h1v1h-1zM1421 785h1v1h-1zM1422 785h1v4h-1zM1423 788h1v5h-1zM1424 792h1v3h-1zM1425 794h1v3h-1zM1426 796h1v1h-1zM1427 796h1v1h-1zM1428 795h1v2h-1zM1429 793h1v3h-1zM1430 793h1v1h-1zM1431 793h1v1h-1zM1432 793h1v3h-1zM1433 795h1v2h-1zM1434 796h1v1h-1zM1435 794h1v3h-1zM1436 790h1v5h-1zM1437 785h1v6h-1zM1438 783h1v3h-1zM1439 782h1v2h-1zM1440 782h1v1h-1zM1441 782h1v3h-1zM1442 784h1v5h-1zM1443 788h1v4h-1zM1444 791h1v4h-1zM1445 794h1v3h-1zM1446 796h1v3h-1zM1447 798h1v3h-1zM1448 796h1v4h-1zM1449 796h1v1h-1zM1450 796h1v1h-1zM1451 796h1v1h-1zM1452 795h1v2h-1zM1453 793h1v3h-1zM1454 793h1v1h-1zM1455 793h1v1h-1zM1456 793h1v1h-1zM1457 793h1v1h-1zM1458 793h1v1h-1zM1459 793h1v2h-1zM1460 794h1v2h-1zM1461 795h1v2h-1zM1462 796h1v5h-1zM1463 800h1v4h-1zM1464 803h1v3h-1zM1465 805h1v3h-1zM1466 804h1v3h-1zM1467 801h1v4h-1zM1468 798h1v4h-1zM1469 795h1v4h-1zM1470 794h1v2h-1zM1471 792h1v3h-1zM1472 789h1v4h-1zM1473 789h1v4h-1zM1474 792h1v3h-1zM1475 794h1v4h-1zM1476 797h1v3h-1zM1477 799h1v2h-1zM1478 800h1v1h-1zM1479 800h1v1h-1zM1480 800h1v1h-1zM1481 800h1v4h-1zM1482 803h1v1h-1zM1483 803h1v1h-1zM1484 803h1v1h-1zM1485 800h1v4h-1zM1486 796h1v5h-1zM1487 795h1v2h-1zM1488 794h1v2h-1zM1489 793h1v2h-1zM1490 793h1v2h-1zM1491 794h1v2h-1zM1492 795h1v2h-1zM1493 796h1v4h-1zM1494 799h1v5h-1zM1495 803h1v1h-1zM1496 802h1v2h-1zM1497 800h1v3h-1zM1498 800h1v1h-1zM1499 800h1v1h-1zM1500 800h1v1h-1zM1501 800h1v1h-1zM1502 800h1v1h-1zM1503 800h1v2h-1zM1504 801h1v3h-1zM1505 803h1v7h-1zM1506 809h1v2h-1zM1507 810h1v1h-1zM1508 810h1v1h-1zM1509 806h1v5h-1zM1510 804h1v3h-1zM1511 804h1v1h-1zM1512 804h1v1h-1zM1513 804h1v2h-1zM1514 805h1v3h-1zM1515 807h1v1h-1zM1516 807h1v1h-1zM1517 807h1v3h-1zM1518 809h1v2h-1zM1519 810h1v2h-1zM1520 811h1v1h-1zM1521 811h1v5h-1zM1522 815h1v4h-1zM1523 818h1v1h-1zM1524 818h1v2h-1zM1525 818h1v2h-1zM1526 816h1v3h-1zM1527 813h1v4h-1zM1528 811h1v3h-1zM1529 811h1v1h-1zM1530 811h1v1h-1zM1531 811h1v1h-1zM1532 811h1v1h-1zM1533 811h1v2h-1zM1534 812h1v3h-1zM1535 814h1v4h-1zM1536 817h1v3h-1zM1537 819h1v1h-1zM1538 819h1v1h-1zM1539 817h1v3h-1zM1540 812h1v6h-1zM1541 809h1v4h-1zM1542 807h1v3h-1zM1543 806h1v2h-1zM1544 806h1v1h-1zM1545 806h1v1h-1zM1546 804h1v3h-1zM1547 804h1v1h-1zM1548 804h1v1h-1zM1549 800h1v5h-1zM1550 801h1v4h-1zM1551 804h1v3h-1zM1552 806h1v2h-1zM1553 807h1v1h-1zM1554 807h1v1h-1zM1555 806h1v2h-1zM1556 804h1v3h-1zM1557 804h1v1h-1zM1558 803h1v2h-1zM1559 802h1v2h-1zM1560 800h1v3h-1zM1561 801h1v4h-1zM1562 802h1v3h-1zM1563 800h1v3h-1zM1564 800h1v1h-1zM1565 800h1v1h-1zM1566 800h1v1h-1zM1567 800h1v1h-1zM1568 800h1v5h-1zM1569 804h1v1h-1zM1570 804h1v1h-1zM1571 804h1v1h-1zM1572 804h1v1h-1zM1573 804h1v2h-1zM1574 805h1v3h-1zM1575 807h1v1h-1zM1576 807h1v1h-1zM1577 807h1v3h-1zM1578 809h1v3h-1zM1579 811h1v1h-1zM1580 807h1v5h-1zM1581 804h1v4h-1zM1582 804h1v1h-1zM1583 804h1v1h-1zM1584 804h1v1h-1zM1585 804h1v2h-1zM1586 805h1v3h-1zM1587 807h1v5h-1zM1588 807h1v4h-1zM1589 805h1v3h-1zM1590 804h1v2h-1zM1591 804h1v1h-1zM1592 804h1v1h-1zM1593 804h1v1h-1zM1594 804h1v1h-1zM1595 803h1v2h-1zM1596 800h1v4h-1zM1597 797h1v4h-1zM1598 796h1v2h-1zM1599 796h1v1h-1zM1600 796h1v2h-1zM1601 797h1v4h-1zM1602 800h1v1h-1zM1603 799h1v2h-1zM1604 796h1v4h-1zM1605 796h1v1h-1zM1606 795h1v2h-1zM1607 795h1v1h-1zM1608 793h1v3h-1zM1609 793h1v3h-1zM1610 795h1v2h-1zM1611 796h1v2h-1zM1612 797h1v3h-1zM1613 799h1v2h-1zM1614 800h1v1h-1zM1615 800h1v1h-1zM1616 799h1v2h-1zM1617 796h1v4h-1zM1618 796h1v1h-1zM1619 796h1v2h-1zM1620 797h1v4h-1zM1621 800h1v5h-1zM1622 804h1v1h-1zM1623 804h1v1h-1zM1624 804h1v1h-1zM1625 801h1v4h-1zM1626 800h1v2h-1zM1627 800h1v1h-1zM1628 800h1v1h-1zM1629 800h1v1h-1zM1630 800h1v1h-1zM1631 800h1v5h-1zM1632 804h1v1h-1zM1633 804h1v1h-1zM1634 804h1v2h-1zM1635 805h1v3h-1zM1636 804h1v3h-1zM1637 804h1v1h-1zM1638 804h1v1h-1zM1639 804h1v1h-1zM1640 801h1v4h-1zM1641 800h1v2h-1zM1642 800h1v1h-1zM1643 800h1v1h-1zM1644 800h1v5h-1zM1645 804h1v1h-1zM1646 804h1v1h-1zM1647 804h1v3h-1zM1648 806h1v2h-1zM1649 804h1v3h-1zM1650 804h1v1h-1zM1651 804h1v1h-1zM1652 802h1v3h-1zM1653 800h1v3h-1zM1654 801h1v4h-1zM1655 800h1v4h-1zM1656 803h1v2h-1zM1657 804h1v1h-1zM1658 804h1v1h-1zM1659 804h1v1h-1zM1660 804h1v1h-1zM1661 804h1v1h-1zM1662 804h1v1h-1zM1663 804h1v2h-1zM1664 805h1v2h-1zM1665 804h1v4h-1zM1666 801h1v4h-1zM1667 800h1v2h-1zM1668 800h1v1h-1zM1669 800h1v3h-1zM1670 802h1v3h-1zM1671 804h1v1h-1zM1672 804h1v5h-1zM1673 808h1v4h-1zM1674 811h1v1h-1zM1675 811h1v1h-1zM1676 811h1v1h-1zM1677 811h1v1h-1zM1678 811h1v2h-1zM1679 812h1v4h-1zM1680 809h1v5h-1zM1681 807h1v3h-1zM1682 807h1v1h-1zM1683 807h1v1h-1zM1684 807h1v1h-1zM1685 807h1v1h-1zM1686 807h1v1h-1zM1687 807h1v1h-1zM1688 807h1v5h-1zM1689 811h1v5h-1zM1690 815h1v1h-1zM1691 815h1v6h-1zM1692 820h1v4h-1zM1693 823h1v3h-1zM1694 825h1v2h-1zM1695 822h1v4h-1zM1696 820h1v3h-1zM1697 817h1v4h-1zM1698 813h1v5h-1zM1699 810h1v4h-1zM1700 808h1v3h-1zM1701 807h1v2h-1zM1702 807h1v1h-1zM1703 807h1v1h-1zM1704 807h1v6h-1zM1705 812h1v8h-1zM1706 819h1v4h-1zM1707 821h1v2h-1zM1708 819h1v3h-1zM1709 817h1v3h-1zM1710 814h1v4h-1zM1711 811h1v4h-1z" shape-rendering="crispEdges"/></defs><use href="#wf" fill="#ffff00"/></g></svg><div class="a rg" style="left:54px;top:85px;width:256px;height:647px;"></div><div class="a rg" style="left:437px;top:316px;width:43px;height:601px;"></div><div class="a rg" style="left:734px;top:316px;width:44px;height:601px;"></div><div class="a rg" style="left:1414px;top:85px;width:256px;height:647px;"></div><svg class="a" style="left:0;top:0" width="1920" height="1080" viewBox="0 0 1920 1080"><defs><clipPath id="pc2"><rect x="12" y="58" width="1700" height="924"/></clipPath></defs><g clip-path="url(#pc2)"><g clip-path="url(#rc)"><use href="#wf" fill="#b4f59a"/></g><line x1="12" x2="1681.6" y1="824.5" y2="824.5" stroke="#f4f4f4" stroke-width="1" stroke-dasharray="5 5" stroke-dashoffset="2" shape-rendering="crispEdges"/><line x1="352.5" x2="352.5" y1="92" y2="958" stroke="#f0f0f0" stroke-width="1" stroke-dasharray="5 5" stroke-dashoffset="-0.3" shape-rendering="crispEdges"/><path d="M12 85h1v1h-1zM46 85h1v1h-1zM80 85h1v1h-1zM114 85h1v1h-1zM148 85h1v1h-1zM182 85h1v1h-1zM216 85h1v1h-1zM250 85h1v1h-1zM284 85h1v1h-1zM318 85h1v1h-1zM352 85h1v1h-1zM386 85h1v1h-1zM420 85h1v1h-1zM454 85h1v1h-1zM488 85h1v1h-1zM522 85h1v1h-1zM556 85h1v1h-1zM590 85h1v1h-1zM624 85h1v1h-1zM658 85h1v1h-1zM692 85h1v1h-1zM726 85h1v1h-1zM760 85h1v1h-1zM794 85h1v1h-1zM828 85h1v1h-1zM862 85h1v1h-1zM896 85h1v1h-1zM930 85h1v1h-1zM964 85h1v1h-1zM998 85h1v1h-1zM1032 85h1v1h-1zM1066 85h1v1h-1zM1100 85h1v1h-1zM1134 85h1v1h-1zM1168 85h1v1h-1zM1202 85h1v1h-1zM1236 85h1v1h-1zM1270 85h1v1h-1zM1304 85h1v1h-1zM1338 85h1v1h-1zM1372 85h1v1h-1zM1406 85h1v1h-1zM1440 85h1v1h-1zM1474 85h1v1h-1zM1508 85h1v1h-1zM1542 85h1v1h-1zM1576 85h1v1h-1zM1610 85h1v1h-1zM1644 85h1v1h-1zM1678 85h1v1h-1zM1712 85h1v1h-1zM12 178h1v1h-1zM46 178h1v1h-1zM80 178h1v1h-1zM114 178h1v1h-1zM148 178h1v1h-1zM182 178h1v1h-1zM216 178h1v1h-1zM250 178h1v1h-1zM284 178h1v1h-1zM318 178h1v1h-1zM352 178h1v1h-1zM386 178h1v1h-1zM420 178h1v1h-1zM454 178h1v1h-1zM488 178h1v1h-1zM522 178h1v1h-1zM556 178h1v1h-1zM590 178h1v1h-1zM624 178h1v1h-1zM658 178h1v1h-1zM692 178h1v1h-1zM726 178h1v1h-1zM760 178h1v1h-1zM794 178h1v1h-1zM828 178h1v1h-1zM862 178h1v1h-1zM896 178h1v1h-1zM930 178h1v1h-1zM964 178h1v1h-1zM998 178h1v1h-1zM1032 178h1v1h-1zM1066 178h1v1h-1zM1100 178h1v1h-1zM1134 178h1v1h-1zM1168 178h1v1h-1zM1202 178h1v1h-1zM1236 178h1v1h-1zM1270 178h1v1h-1zM1304 178h1v1h-1zM1338 178h1v1h-1zM1372 178h1v1h-1zM1406 178h1v1h-1zM1440 178h1v1h-1zM1474 178h1v1h-1zM1508 178h1v1h-1zM1542 178h1v1h-1zM1576 178h1v1h-1zM1610 178h1v1h-1zM1644 178h1v1h-1zM1712 178h1v1h-1zM12 270h1v1h-1zM46 270h1v1h-1zM80 270h1v1h-1zM114 270h1v1h-1zM148 270h1v1h-1zM182 270h1v1h-1zM216 270h1v1h-1zM250 270h1v1h-1zM284 270h1v1h-1zM318 270h1v1h-1zM352 270h1v1h-1zM386 270h1v1h-1zM420 270h1v1h-1zM454 270h1v1h-1zM488 270h1v1h-1zM522 270h1v1h-1zM556 270h1v1h-1zM590 270h1v1h-1zM624 270h1v1h-1zM658 270h1v1h-1zM692 270h1v1h-1zM726 270h1v1h-1zM760 270h1v1h-1zM794 270h1v1h-1zM828 270h1v1h-1zM862 270h1v1h-1zM896 270h1v1h-1zM930 270h1v1h-1zM964 270h1v1h-1zM998 270h1v1h-1zM1032 270h1v1h-1zM1066 270h1v1h-1zM1100 270h1v1h-1zM1134 270h1v1h-1zM1168 270h1v1h-1zM1202 270h1v1h-1zM1236 270h1v1h-1zM1270 270h1v1h-1zM1304 270h1v1h-1zM1338 270h1v1h-1zM1372 270h1v1h-1zM1406 270h1v1h-1zM1440 270h1v1h-1zM1474 270h1v1h-1zM1508 270h1v1h-1zM1542 270h1v1h-1zM1576 270h1v1h-1zM1610 270h1v1h-1zM1644 270h1v1h-1zM1678 270h1v1h-1zM1712 270h1v1h-1zM12 362h1v1h-1zM46 362h1v1h-1zM80 362h1v1h-1zM114 362h1v1h-1zM148 362h1v1h-1zM182 362h1v1h-1zM216 362h1v1h-1zM250 362h1v1h-1zM284 362h1v1h-1zM318 362h1v1h-1zM352 362h1v1h-1zM386 362h1v1h-1zM420 362h1v1h-1zM454 362h1v1h-1zM488 362h1v1h-1zM522 362h1v1h-1zM556 362h1v1h-1zM590 362h1v1h-1zM624 362h1v1h-1zM658 362h1v1h-1zM692 362h1v1h-1zM726 362h1v1h-1zM760 362h1v1h-1zM794 362h1v1h-1zM828 362h1v1h-1zM862 362h1v1h-1zM896 362h1v1h-1zM930 362h1v1h-1zM964 362h1v1h-1zM998 362h1v1h-1zM1032 362h1v1h-1zM1066 362h1v1h-1zM1100 362h1v1h-1zM1134 362h1v1h-1zM1168 362h1v1h-1zM1202 362h1v1h-1zM1236 362h1v1h-1zM1270 362h1v1h-1zM1304 362h1v1h-1zM1338 362h1v1h-1zM1372 362h1v1h-1zM1406 362h1v1h-1zM1440 362h1v1h-1zM1474 362h1v1h-1zM1508 362h1v1h-1zM1542 362h1v1h-1zM1576 362h1v1h-1zM1610 362h1v1h-1zM1644 362h1v1h-1zM1712 362h1v1h-1zM12 455h1v1h-1zM46 455h1v1h-1zM80 455h1v1h-1zM114 455h1v1h-1zM148 455h1v1h-1zM182 455h1v1h-1zM216 455h1v1h-1zM250 455h1v1h-1zM284 455h1v1h-1zM318 455h1v1h-1zM352 455h1v1h-1zM386 455h1v1h-1zM420 455h1v1h-1zM454 455h1v1h-1zM488 455h1v1h-1zM522 455h1v1h-1zM556 455h1v1h-1zM590 455h1v1h-1zM624 455h1v1h-1zM658 455h1v1h-1zM692 455h1v1h-1zM726 455h1v1h-1zM760 455h1v1h-1zM794 455h1v1h-1zM828 455h1v1h-1zM862 455h1v1h-1zM896 455h1v1h-1zM930 455h1v1h-1zM964 455h1v1h-1zM998 455h1v1h-1zM1032 455h1v1h-1zM1066 455h1v1h-1zM1100 455h1v1h-1zM1134 455h1v1h-1zM1168 455h1v1h-1zM1202 455h1v1h-1zM1236 455h1v1h-1zM1270 455h1v1h-1zM1304 455h1v1h-1zM1338 455h1v1h-1zM1372 455h1v1h-1zM1406 455h1v1h-1zM1440 455h1v1h-1zM1474 455h1v1h-1zM1508 455h1v1h-1zM1542 455h1v1h-1zM1576 455h1v1h-1zM1610 455h1v1h-1zM1644 455h1v1h-1zM1678 455h1v1h-1zM1712 455h1v1h-1zM12 547h1v1h-1zM46 547h1v1h-1zM80 547h1v1h-1zM114 547h1v1h-1zM148 547h1v1h-1zM182 547h1v1h-1zM216 547h1v1h-1zM250 547h1v1h-1zM284 547h1v1h-1zM318 547h1v1h-1zM352 547h1v1h-1zM386 547h1v1h-1zM420 547h1v1h-1zM454 547h1v1h-1zM488 547h1v1h-1zM522 547h1v1h-1zM556 547h1v1h-1zM590 547h1v1h-1zM624 547h1v1h-1zM658 547h1v1h-1zM692 547h1v1h-1zM726 547h1v1h-1zM760 547h1v1h-1zM794 547h1v1h-1zM828 547h1v1h-1zM862 547h1v1h-1zM896 547h1v1h-1zM930 547h1v1h-1zM964 547h1v1h-1zM998 547h1v1h-1zM1032 547h1v1h-1zM1066 547h1v1h-1zM1100 547h1v1h-1zM1134 547h1v1h-1zM1168 547h1v1h-1zM1202 547h1v1h-1zM1236 547h1v1h-1zM1270 547h1v1h-1zM1304 547h1v1h-1zM1338 547h1v1h-1zM1372 547h1v1h-1zM1406 547h1v1h-1zM1440 547h1v1h-1zM1474 547h1v1h-1zM1508 547h1v1h-1zM1542 547h1v1h-1zM1576 547h1v1h-1zM1610 547h1v1h-1zM1644 547h1v1h-1zM1712 547h1v1h-1zM12 640h1v1h-1zM46 640h1v1h-1zM80 640h1v1h-1zM114 640h1v1h-1zM148 640h1v1h-1zM182 640h1v1h-1zM216 640h1v1h-1zM250 640h1v1h-1zM284 640h1v1h-1zM318 640h1v1h-1zM352 640h1v1h-1zM386 640h1v1h-1zM420 640h1v1h-1zM454 640h1v1h-1zM488 640h1v1h-1zM522 640h1v1h-1zM556 640h1v1h-1zM590 640h1v1h-1zM624 640h1v1h-1zM658 640h1v1h-1zM692 640h1v1h-1zM726 640h1v1h-1zM760 640h1v1h-1zM794 640h1v1h-1zM828 640h1v1h-1zM862 640h1v1h-1zM896 640h1v1h-1zM930 640h1v1h-1zM964 640h1v1h-1zM998 640h1v1h-1zM1032 640h1v1h-1zM1066 640h1v1h-1zM1100 640h1v1h-1zM1134 640h1v1h-1zM1168 640h1v1h-1zM1202 640h1v1h-1zM1236 640h1v1h-1zM1270 640h1v1h-1zM1304 640h1v1h-1zM1338 640h1v1h-1zM1372 640h1v1h-1zM1406 640h1v1h-1zM1440 640h1v1h-1zM1474 640h1v1h-1zM1508 640h1v1h-1zM1542 640h1v1h-1zM1576 640h1v1h-1zM1610 640h1v1h-1zM1644 640h1v1h-1zM1678 640h1v1h-1zM1712 640h1v1h-1zM12 732h1v1h-1zM46 732h1v1h-1zM80 732h1v1h-1zM114 732h1v1h-1zM148 732h1v1h-1zM182 732h1v1h-1zM216 732h1v1h-1zM250 732h1v1h-1zM284 732h1v1h-1zM318 732h1v1h-1zM352 732h1v1h-1zM386 732h1v1h-1zM420 732h1v1h-1zM454 732h1v1h-1zM488 732h1v1h-1zM522 732h1v1h-1zM556 732h1v1h-1zM590 732h1v1h-1zM624 732h1v1h-1zM658 732h1v1h-1zM692 732h1v1h-1zM726 732h1v1h-1zM760 732h1v1h-1zM794 732h1v1h-1zM828 732h1v1h-1zM862 732h1v1h-1zM896 732h1v1h-1zM930 732h1v1h-1zM964 732h1v1h-1zM998 732h1v1h-1zM1032 732h1v1h-1zM1066 732h1v1h-1zM1100 732h1v1h-1zM1134 732h1v1h-1zM1168 732h1v1h-1zM1202 732h1v1h-1zM1236 732h1v1h-1zM1270 732h1v1h-1zM1304 732h1v1h-1zM1338 732h1v1h-1zM1372 732h1v1h-1zM1406 732h1v1h-1zM1440 732h1v1h-1zM1474 732h1v1h-1zM1508 732h1v1h-1zM1542 732h1v1h-1zM1576 732h1v1h-1zM1610 732h1v1h-1zM1644 732h1v1h-1zM1712 732h1v1h-1zM12 824h1v1h-1zM46 824h1v1h-1zM80 824h1v1h-1zM114 824h1v1h-1zM148 824h1v1h-1zM182 824h1v1h-1zM216 824h1v1h-1zM250 824h1v1h-1zM284 824h1v1h-1zM318 824h1v1h-1zM352 824h1v1h-1zM386 824h1v1h-1zM420 824h1v1h-1zM454 824h1v1h-1zM488 824h1v1h-1zM522 824h1v1h-1zM556 824h1v1h-1zM590 824h1v1h-1zM624 824h1v1h-1zM658 824h1v1h-1zM692 824h1v1h-1zM726 824h1v1h-1zM760 824h1v1h-1zM794 824h1v1h-1zM828 824h1v1h-1zM862 824h1v1h-1zM896 824h1v1h-1zM930 824h1v1h-1zM964 824h1v1h-1zM998 824h1v1h-1zM1032 824h1v1h-1zM1066 824h1v1h-1zM1100 824h1v1h-1zM1134 824h1v1h-1zM1168 824h1v1h-1zM1202 824h1v1h-1zM1236 824h1v1h-1zM1270 824h1v1h-1zM1304 824h1v1h-1zM1338 824h1v1h-1zM1372 824h1v1h-1zM1406 824h1v1h-1zM1440 824h1v1h-1zM1474 824h1v1h-1zM1508 824h1v1h-1zM1542 824h1v1h-1zM1576 824h1v1h-1zM1610 824h1v1h-1zM1644 824h1v1h-1zM1678 824h1v1h-1zM1712 824h1v1h-1zM12 917h1v1h-1zM46 917h1v1h-1zM80 917h1v1h-1zM114 917h1v1h-1zM148 917h1v1h-1zM182 917h1v1h-1zM216 917h1v1h-1zM250 917h1v1h-1zM284 917h1v1h-1zM318 917h1v1h-1zM352 917h1v1h-1zM386 917h1v1h-1zM420 917h1v1h-1zM454 917h1v1h-1zM488 917h1v1h-1zM522 917h1v1h-1zM556 917h1v1h-1zM590 917h1v1h-1zM624 917h1v1h-1zM658 917h1v1h-1zM692 917h1v1h-1zM726 917h1v1h-1zM760 917h1v1h-1zM794 917h1v1h-1zM828 917h1v1h-1zM862 917h1v1h-1zM896 917h1v1h-1zM930 917h1v1h-1zM964 917h1v1h-1zM998 917h1v1h-1zM1032 917h1v1h-1zM1066 917h1v1h-1zM1100 917h1v1h-1zM1134 917h1v1h-1zM1168 917h1v1h-1zM1202 917h1v1h-1zM1236 917h1v1h-1zM1270 917h1v1h-1zM1304 917h1v1h-1zM1338 917h1v1h-1zM1372 917h1v1h-1zM1406 917h1v1h-1zM1440 917h1v1h-1zM1474 917h1v1h-1zM1508 917h1v1h-1zM1542 917h1v1h-1zM1576 917h1v1h-1zM1610 917h1v1h-1zM1644 917h1v1h-1zM1712 917h1v1h-1zM12 67h1v1h-1zM12 85h1v1h-1zM12 104h1v1h-1zM12 122h1v1h-1zM12 141h1v1h-1zM12 159h1v1h-1zM12 178h1v1h-1zM12 196h1v1h-1zM12 215h1v1h-1zM12 233h1v1h-1zM12 251h1v1h-1zM12 270h1v1h-1zM12 288h1v1h-1zM12 307h1v1h-1zM12 325h1v1h-1zM12 344h1v1h-1zM12 362h1v1h-1zM12 381h1v1h-1zM12 399h1v1h-1zM12 418h1v1h-1zM12 436h1v1h-1zM12 455h1v1h-1zM12 473h1v1h-1zM12 492h1v1h-1zM12 510h1v1h-1zM12 529h1v1h-1zM12 547h1v1h-1zM12 566h1v1h-1zM12 584h1v1h-1zM12 603h1v1h-1zM12 621h1v1h-1zM12 640h1v1h-1zM12 658h1v1h-1zM12 677h1v1h-1zM12 695h1v1h-1zM12 713h1v1h-1zM12 732h1v1h-1zM12 750h1v1h-1zM12 769h1v1h-1zM12 787h1v1h-1zM12 806h1v1h-1zM12 824h1v1h-1zM12 843h1v1h-1zM12 861h1v1h-1zM12 880h1v1h-1zM12 898h1v1h-1zM12 917h1v1h-1zM12 935h1v1h-1zM12 954h1v1h-1zM12 972h1v1h-1zM182 67h1v1h-1zM182 85h1v1h-1zM182 104h1v1h-1zM182 122h1v1h-1zM182 141h1v1h-1zM182 159h1v1h-1zM182 178h1v1h-1zM182 196h1v1h-1zM182 215h1v1h-1zM182 233h1v1h-1zM182 251h1v1h-1zM182 270h1v1h-1zM182 288h1v1h-1zM182 307h1v1h-1zM182 325h1v1h-1zM182 344h1v1h-1zM182 362h1v1h-1zM182 381h1v1h-1zM182 399h1v1h-1zM182 418h1v1h-1zM182 436h1v1h-1zM182 455h1v1h-1zM182 473h1v1h-1zM182 492h1v1h-1zM182 510h1v1h-1zM182 529h1v1h-1zM182 547h1v1h-1zM182 566h1v1h-1zM182 584h1v1h-1zM182 603h1v1h-1zM182 621h1v1h-1zM182 640h1v1h-1zM182 658h1v1h-1zM182 677h1v1h-1zM182 695h1v1h-1zM182 713h1v1h-1zM182 732h1v1h-1zM182 750h1v1h-1zM182 769h1v1h-1zM182 787h1v1h-1zM182 806h1v1h-1zM182 824h1v1h-1zM182 843h1v1h-1zM182 861h1v1h-1zM182 880h1v1h-1zM182 898h1v1h-1zM182 917h1v1h-1zM182 935h1v1h-1zM182 954h1v1h-1zM352 67h1v1h-1zM352 85h1v1h-1zM352 104h1v1h-1zM352 122h1v1h-1zM352 141h1v1h-1zM352 159h1v1h-1zM352 178h1v1h-1zM352 196h1v1h-1zM352 215h1v1h-1zM352 233h1v1h-1zM352 251h1v1h-1zM352 270h1v1h-1zM352 288h1v1h-1zM352 307h1v1h-1zM352 325h1v1h-1zM352 344h1v1h-1zM352 362h1v1h-1zM352 381h1v1h-1zM352 399h1v1h-1zM352 418h1v1h-1zM352 436h1v1h-1zM352 455h1v1h-1zM352 473h1v1h-1zM352 492h1v1h-1zM352 510h1v1h-1zM352 529h1v1h-1zM352 547h1v1h-1zM352 566h1v1h-1zM352 584h1v1h-1zM352 603h1v1h-1zM352 621h1v1h-1zM352 640h1v1h-1zM352 658h1v1h-1zM352 677h1v1h-1zM352 695h1v1h-1zM352 713h1v1h-1zM352 732h1v1h-1zM352 750h1v1h-1zM352 769h1v1h-1zM352 787h1v1h-1zM352 806h1v1h-1zM352 824h1v1h-1zM352 843h1v1h-1zM352 861h1v1h-1zM352 880h1v1h-1zM352 898h1v1h-1zM352 917h1v1h-1zM352 935h1v1h-1zM352 954h1v1h-1zM522 67h1v1h-1zM522 85h1v1h-1zM522 104h1v1h-1zM522 122h1v1h-1zM522 141h1v1h-1zM522 159h1v1h-1zM522 178h1v1h-1zM522 196h1v1h-1zM522 215h1v1h-1zM522 233h1v1h-1zM522 251h1v1h-1zM522 270h1v1h-1zM522 288h1v1h-1zM522 307h1v1h-1zM522 325h1v1h-1zM522 344h1v1h-1zM522 362h1v1h-1zM522 381h1v1h-1zM522 399h1v1h-1zM522 418h1v1h-1zM522 436h1v1h-1zM522 455h1v1h-1zM522 473h1v1h-1zM522 492h1v1h-1zM522 510h1v1h-1zM522 529h1v1h-1zM522 547h1v1h-1zM522 566h1v1h-1zM522 584h1v1h-1zM522 603h1v1h-1zM522 621h1v1h-1zM522 640h1v1h-1zM522 658h1v1h-1zM522 677h1v1h-1zM522 695h1v1h-1zM522 713h1v1h-1zM522 732h1v1h-1zM522 750h1v1h-1zM522 769h1v1h-1zM522 787h1v1h-1zM522 806h1v1h-1zM522 824h1v1h-1zM522 843h1v1h-1zM522 861h1v1h-1zM522 880h1v1h-1zM522 898h1v1h-1zM522 917h1v1h-1zM522 935h1v1h-1zM522 954h1v1h-1zM692 67h1v1h-1zM692 85h1v1h-1zM692 104h1v1h-1zM692 122h1v1h-1zM692 141h1v1h-1zM692 159h1v1h-1zM692 178h1v1h-1zM692 196h1v1h-1zM692 215h1v1h-1zM692 233h1v1h-1zM692 251h1v1h-1zM692 270h1v1h-1zM692 288h1v1h-1zM692 307h1v1h-1zM692 325h1v1h-1zM692 344h1v1h-1zM692 362h1v1h-1zM692 381h1v1h-1zM692 399h1v1h-1zM692 418h1v1h-1zM692 436h1v1h-1zM692 455h1v1h-1zM692 473h1v1h-1zM692 492h1v1h-1zM692 510h1v1h-1zM692 529h1v1h-1zM692 547h1v1h-1zM692 566h1v1h-1zM692 584h1v1h-1zM692 603h1v1h-1zM692 621h1v1h-1zM692 640h1v1h-1zM692 658h1v1h-1zM692 677h1v1h-1zM692 695h1v1h-1zM692 713h1v1h-1zM692 732h1v1h-1zM692 750h1v1h-1zM692 769h1v1h-1zM692 787h1v1h-1zM692 806h1v1h-1zM692 824h1v1h-1zM692 843h1v1h-1zM692 861h1v1h-1zM692 880h1v1h-1zM692 898h1v1h-1zM692 917h1v1h-1zM692 935h1v1h-1zM692 954h1v1h-1zM862 67h1v1h-1zM862 85h1v1h-1zM862 104h1v1h-1zM862 122h1v1h-1zM862 141h1v1h-1zM862 159h1v1h-1zM862 178h1v1h-1zM862 196h1v1h-1zM862 215h1v1h-1zM862 233h1v1h-1zM862 251h1v1h-1zM862 270h1v1h-1zM862 288h1v1h-1zM862 307h1v1h-1zM862 325h1v1h-1zM862 344h1v1h-1zM862 362h1v1h-1zM862 381h1v1h-1zM862 399h1v1h-1zM862 418h1v1h-1zM862 436h1v1h-1zM862 455h1v1h-1zM862 473h1v1h-1zM862 492h1v1h-1zM862 510h1v1h-1zM862 529h1v1h-1zM862 547h1v1h-1zM862 566h1v1h-1zM862 584h1v1h-1zM862 603h1v1h-1zM862 621h1v1h-1zM862 640h1v1h-1zM862 658h1v1h-1zM862 677h1v1h-1zM862 695h1v1h-1zM862 713h1v1h-1zM862 732h1v1h-1zM862 750h1v1h-1zM862 769h1v1h-1zM862 787h1v1h-1zM862 806h1v1h-1zM862 824h1v1h-1zM862 843h1v1h-1zM862 861h1v1h-1zM862 880h1v1h-1zM862 898h1v1h-1zM862 917h1v1h-1zM862 935h1v1h-1zM862 954h1v1h-1zM1032 67h1v1h-1zM1032 85h1v1h-1zM1032 104h1v1h-1zM1032 122h1v1h-1zM1032 141h1v1h-1zM1032 159h1v1h-1zM1032 178h1v1h-1zM1032 196h1v1h-1zM1032 215h1v1h-1zM1032 233h1v1h-1zM1032 251h1v1h-1zM1032 270h1v1h-1zM1032 288h1v1h-1zM1032 307h1v1h-1zM1032 325h1v1h-1zM1032 344h1v1h-1zM1032 362h1v1h-1zM1032 381h1v1h-1zM1032 399h1v1h-1zM1032 418h1v1h-1zM1032 436h1v1h-1zM1032 455h1v1h-1zM1032 473h1v1h-1zM1032 492h1v1h-1zM1032 510h1v1h-1zM1032 529h1v1h-1zM1032 547h1v1h-1zM1032 566h1v1h-1zM1032 584h1v1h-1zM1032 603h1v1h-1zM1032 621h1v1h-1zM1032 640h1v1h-1zM1032 658h1v1h-1zM1032 677h1v1h-1zM1032 695h1v1h-1zM1032 713h1v1h-1zM1032 732h1v1h-1zM1032 750h1v1h-1zM1032 769h1v1h-1zM1032 787h1v1h-1zM1032 806h1v1h-1zM1032 824h1v1h-1zM1032 843h1v1h-1zM1032 861h1v1h-1zM1032 880h1v1h-1zM1032 898h1v1h-1zM1032 917h1v1h-1zM1032 935h1v1h-1zM1032 954h1v1h-1zM1202 67h1v1h-1zM1202 85h1v1h-1zM1202 104h1v1h-1zM1202 122h1v1h-1zM1202 141h1v1h-1zM1202 159h1v1h-1zM1202 178h1v1h-1zM1202 196h1v1h-1zM1202 215h1v1h-1zM1202 233h1v1h-1zM1202 251h1v1h-1zM1202 270h1v1h-1zM1202 288h1v1h-1zM1202 307h1v1h-1zM1202 325h1v1h-1zM1202 344h1v1h-1zM1202 362h1v1h-1zM1202 381h1v1h-1zM1202 399h1v1h-1zM1202 418h1v1h-1zM1202 436h1v1h-1zM1202 455h1v1h-1zM1202 473h1v1h-1zM1202 492h1v1h-1zM1202 510h1v1h-1zM1202 529h1v1h-1zM1202 547h1v1h-1zM1202 566h1v1h-1zM1202 584h1v1h-1zM1202 603h1v1h-1zM1202 621h1v1h-1zM1202 640h1v1h-1zM1202 658h1v1h-1zM1202 677h1v1h-1zM1202 695h1v1h-1zM1202 713h1v1h-1zM1202 732h1v1h-1zM1202 750h1v1h-1zM1202 769h1v1h-1zM1202 787h1v1h-1zM1202 806h1v1h-1zM1202 824h1v1h-1zM1202 843h1v1h-1zM1202 861h1v1h-1zM1202 880h1v1h-1zM1202 898h1v1h-1zM1202 917h1v1h-1zM1202 935h1v1h-1zM1202 954h1v1h-1zM1372 67h1v1h-1zM1372 85h1v1h-1zM1372 104h1v1h-1zM1372 122h1v1h-1zM1372 141h1v1h-1zM1372 159h1v1h-1zM1372 178h1v1h-1zM1372 196h1v1h-1zM1372 215h1v1h-1zM1372 233h1v1h-1zM1372 251h1v1h-1zM1372 270h1v1h-1zM1372 288h1v1h-1zM1372 307h1v1h-1zM1372 325h1v1h-1zM1372 344h1v1h-1zM1372 362h1v1h-1zM1372 381h1v1h-1zM1372 399h1v1h-1zM1372 418h1v1h-1zM1372 436h1v1h-1zM1372 455h1v1h-1zM1372 473h1v1h-1zM1372 492h1v1h-1zM1372 510h1v1h-1zM1372 529h1v1h-1zM1372 547h1v1h-1zM1372 566h1v1h-1zM1372 584h1v1h-1zM1372 603h1v1h-1zM1372 621h1v1h-1zM1372 640h1v1h-1zM1372 658h1v1h-1zM1372 677h1v1h-1zM1372 695h1v1h-1zM1372 713h1v1h-1zM1372 732h1v1h-1zM1372 750h1v1h-1zM1372 769h1v1h-1zM1372 787h1v1h-1zM1372 806h1v1h-1zM1372 824h1v1h-1zM1372 843h1v1h-1zM1372 861h1v1h-1zM1372 880h1v1h-1zM1372 898h1v1h-1zM1372 917h1v1h-1zM1372 935h1v1h-1zM1372 954h1v1h-1zM1542 67h1v1h-1zM1542 85h1v1h-1zM1542 104h1v1h-1zM1542 122h1v1h-1zM1542 141h1v1h-1zM1542 159h1v1h-1zM1542 178h1v1h-1zM1542 196h1v1h-1zM1542 215h1v1h-1zM1542 233h1v1h-1zM1542 251h1v1h-1zM1542 270h1v1h-1zM1542 288h1v1h-1zM1542 307h1v1h-1zM1542 325h1v1h-1zM1542 344h1v1h-1zM1542 362h1v1h-1zM1542 381h1v1h-1zM1542 399h1v1h-1zM1542 418h1v1h-1zM1542 436h1v1h-1zM1542 455h1v1h-1zM1542 473h1v1h-1zM1542 492h1v1h-1zM1542 510h1v1h-1zM1542 529h1v1h-1zM1542 547h1v1h-1zM1542 566h1v1h-1zM1542 584h1v1h-1zM1542 603h1v1h-1zM1542 621h1v1h-1zM1542 640h1v1h-1zM1542 658h1v1h-1zM1542 677h1v1h-1zM1542 695h1v1h-1zM1542 713h1v1h-1zM1542 732h1v1h-1zM1542 750h1v1h-1zM1542 769h1v1h-1zM1542 787h1v1h-1zM1542 806h1v1h-1zM1542 824h1v1h-1zM1542 843h1v1h-1zM1542 861h1v1h-1zM1542 880h1v1h-1zM1542 898h1v1h-1zM1542 917h1v1h-1zM1542 935h1v1h-1zM1542 954h1v1h-1zM1712 67h1v1h-1zM1712 85h1v1h-1zM1712 104h1v1h-1zM1712 122h1v1h-1zM1712 141h1v1h-1zM1712 159h1v1h-1zM1712 178h1v1h-1zM1712 196h1v1h-1zM1712 215h1v1h-1zM1712 233h1v1h-1zM1712 251h1v1h-1zM1712 270h1v1h-1zM1712 288h1v1h-1zM1712 307h1v1h-1zM1712 325h1v1h-1zM1712 344h1v1h-1zM1712 362h1v1h-1zM1712 381h1v1h-1zM1712 399h1v1h-1zM1712 418h1v1h-1zM1712 436h1v1h-1zM1712 455h1v1h-1zM1712 473h1v1h-1zM1712 492h1v1h-1zM1712 510h1v1h-1zM1712 529h1v1h-1zM1712 547h1v1h-1zM1712 566h1v1h-1zM1712 584h1v1h-1zM1712 603h1v1h-1zM1712 621h1v1h-1zM1712 640h1v1h-1zM1712 658h1v1h-1zM1712 677h1v1h-1zM1712 695h1v1h-1zM1712 713h1v1h-1zM1712 732h1v1h-1zM1712 750h1v1h-1zM1712 769h1v1h-1zM1712 787h1v1h-1zM1712 806h1v1h-1zM1712 824h1v1h-1zM1712 843h1v1h-1zM1712 861h1v1h-1zM1712 880h1v1h-1zM1712 898h1v1h-1zM1712 917h1v1h-1zM1712 935h1v1h-1zM1712 954h1v1h-1zM1712 972h1v1h-1z" fill="#f2f2f2" fill-opacity="0.93" shape-rendering="crispEdges"/></g></svg>
<span class="t" style="left:170.50px;top:390.00px;font-size:13.8px;color:#fff;-webkit-text-stroke:0.3px #fff;transform:scaleX(0.9374);-webkit-text-stroke:0.25px #fff;">A1</span><div class="a" style="left:170.8px;top:404.40000000000003px;width:21px;height:3.4px;background:#fff;"></div>
<span class="t" style="left:1530.50px;top:390.00px;font-size:13.8px;color:#fff;-webkit-text-stroke:0.3px #fff;transform:scaleX(1.0187);-webkit-text-stroke:0.25px #fff;">A4</span><div class="a" style="left:1530.8px;top:404.40000000000003px;width:21px;height:3.4px;background:#fff;"></div>
<span class="t" style="left:447.00px;top:598.00px;font-size:13.8px;color:#fff;-webkit-text-stroke:0.3px #fff;transform:scaleX(1.0052);-webkit-text-stroke:0.25px #fff;">A2</span><div class="a" style="left:447.3px;top:612.3px;width:21px;height:3.4px;background:#fff;"></div>
<span class="t" style="left:744.70px;top:598.00px;font-size:13.8px;color:#fff;-webkit-text-stroke:0.3px #fff;transform:scaleX(1.0133);-webkit-text-stroke:0.25px #fff;">A3</span><div class="a" style="left:745px;top:612.3px;width:21px;height:3.4px;background:#fff;"></div>
<span class="t" style="left:159.49px;top:964.00px;font-size:13.9px;color:#e6e6e6;-webkit-text-stroke:0.3px #e6e6e6;-webkit-text-stroke:0;">-100 ns</span>
<span class="t" style="left:343.42px;top:964.00px;font-size:13.9px;color:#e6e6e6;-webkit-text-stroke:0.3px #e6e6e6;-webkit-text-stroke:0;">0 s</span>
<span class="t" style="left:501.54px;top:964.00px;font-size:13.9px;color:#e6e6e6;-webkit-text-stroke:0.3px #e6e6e6;-webkit-text-stroke:0;">100 ns</span>
<span class="t" style="left:671.71px;top:964.00px;font-size:13.9px;color:#e6e6e6;-webkit-text-stroke:0.3px #e6e6e6;-webkit-text-stroke:0;">200 ns</span>
<span class="t" style="left:841.82px;top:964.00px;font-size:13.9px;color:#e6e6e6;-webkit-text-stroke:0.3px #e6e6e6;-webkit-text-stroke:0;">300 ns</span>
<span class="t" style="left:1011.92px;top:964.00px;font-size:13.9px;color:#e6e6e6;-webkit-text-stroke:0.3px #e6e6e6;-webkit-text-stroke:0;">400 ns</span>
<span class="t" style="left:1181.78px;top:964.00px;font-size:13.9px;color:#e6e6e6;-webkit-text-stroke:0.3px #e6e6e6;-webkit-text-stroke:0;">500 ns</span>
<span class="t" style="left:1351.71px;top:964.00px;font-size:13.9px;color:#e6e6e6;-webkit-text-stroke:0.3px #e6e6e6;-webkit-text-stroke:0;">600 ns</span>
<span class="t" style="left:1521.71px;top:964.00px;font-size:13.9px;color:#e6e6e6;-webkit-text-stroke:0.3px #e6e6e6;-webkit-text-stroke:0;">700 ns</span>
<span class="t" style="left:1685.82px;top:78.00px;font-size:14.2px;color:#ffff38;-webkit-text-stroke:0.3px #ffff38;transform:scaleX(0.9850);-webkit-text-stroke:0.3px #ffff38;">4 V</span>
<span class="t" style="left:1674.14px;top:170.00px;font-size:14.2px;color:#ffff38;-webkit-text-stroke:0.3px #ffff38;transform:scaleX(0.9850);-webkit-text-stroke:0.3px #ffff38;">3.5 V</span>
<span class="t" style="left:1685.82px;top:262.00px;font-size:14.2px;color:#ffff38;-webkit-text-stroke:0.3px #ffff38;transform:scaleX(0.9850);-webkit-text-stroke:0.3px #ffff38;">3 V</span>
<span class="t" style="left:1674.14px;top:355.00px;font-size:14.2px;color:#ffff38;-webkit-text-stroke:0.3px #ffff38;transform:scaleX(0.9850);-webkit-text-stroke:0.3px #ffff38;">2.5 V</span>
<span class="t" style="left:1685.82px;top:447.00px;font-size:14.2px;color:#ffff38;-webkit-text-stroke:0.3px #ffff38;transform:scaleX(0.9850);-webkit-text-stroke:0.3px #ffff38;">2 V</span>
<span class="t" style="left:1674.14px;top:540.00px;font-size:14.2px;color:#ffff38;-webkit-text-stroke:0.3px #ffff38;transform:scaleX(0.9850);-webkit-text-stroke:0.3px #ffff38;">1.5 V</span>
<span class="t" style="left:1685.82px;top:632.00px;font-size:14.2px;color:#ffff38;-webkit-text-stroke:0.3px #ffff38;transform:scaleX(0.9850);-webkit-text-stroke:0.3px #ffff38;">1 V</span>
<span class="t" style="left:1658.61px;top:724.00px;font-size:14.2px;color:#ffff38;-webkit-text-stroke:0.3px #ffff38;transform:scaleX(0.9850);-webkit-text-stroke:0.3px #ffff38;">500 mV</span>
<span class="t" style="left:1685.82px;top:817.00px;font-size:14.2px;color:#ffff38;-webkit-text-stroke:0.3px #ffff38;transform:scaleX(0.9850);-webkit-text-stroke:0.3px #ffff38;">0 V</span>
<span class="t" style="left:1654.00px;top:909.00px;font-size:14.2px;color:#ffff38;-webkit-text-stroke:0.3px #ffff38;transform:scaleX(0.9850);-webkit-text-stroke:0.3px #ffff38;">-500 mV</span>
<div class="a" style="left:29px;top:76px;width:174px;height:32px;background:rgba(80,72,72,0.82);"></div>
<span class="t" style="left:34.40px;top:81.00px;font-size:18.7px;color:#f4f4f4;-webkit-text-stroke:0.3px #f4f4f4;transform:scaleX(1.0043);">A1 &amp; (A2 | A3) &amp; A4</span>
<svg class="a" style="left:0;top:0" width="1920" height="1080" viewBox="0 0 1920 1080"><path d="M449.5 624.6 L455.7 630.2 L466.1 619" stroke="#50e646" stroke-width="3.2" fill="none"/><path d="M747.2 624.6 L753.4000000000001 630.2 L763.8000000000001 619" stroke="#50e646" stroke-width="3.2" fill="none"/><path d="M342 58 L362.2 58 L352.1 67.6 Z" fill="#ffc229"/><rect x="342.8" y="68.9" width="18.6" height="19.4" fill="#000" stroke="#ffc229" stroke-width="1.7"/><path d="M348.3 87.4 L352.1 95.6 L355.9 87.4" fill="#000" stroke="none"/><path d="M348.0 88.6 L352.1 96.0 L356.2 88.6" fill="none" stroke="#ffc229" stroke-width="1.5"/><path d="M347.4 74.2 H356 M351.7 74.2 V83.8" stroke="#ffc229" stroke-width="2.1" fill="none"/><path d="M684 34 L699.2 34 L691.6 39.4 Z" fill="#ffa826"/><rect x="685.6" y="41.3" width="12.6" height="12.4" rx="1" fill="#000" stroke="#ffa826" stroke-width="1.3"/><path d="M689.6 53.2 L691.8 57.0 L694.0 53.2" fill="#000" stroke="none"/><path d="M689.2 54 L691.8 57.8 L694.4 54" fill="none" stroke="#ffa826" stroke-width="1.2"/><path d="M688.6 45.1 H695.2 M691.9 45.1 V51.2" stroke="#fff" stroke-width="1.9" fill="none"/><path d="M586 37.6 H579.6 V53.4 H586" stroke="#fff" stroke-width="1.3" fill="none"/><path d="M1139 37.6 H1145.4 V53.4 H1139" stroke="#fff" stroke-width="1.3" fill="none"/><path d="M17 508.3 H38.5 L50 519.9 L38.5 531.6 H17 Q16 531.6 16 530.6 V509.3 Q16 508.3 17 508.3 Z" fill="#ffff46"/><path d="M1690.6 521.4 L1703 511 V519.9 H1712 V523 H1703 V532 Z" fill="#ffff4a"/><path d="M1671 64.9 H1703.2 Q1705 64.9 1705 66.7 V98.9 Z" fill="#6a6868"/><circle cx="1698.2" cy="71.4" r="4.0" fill="none" stroke="#e2e2e2" stroke-width="1.5"/><path d="M1694.6 75.4 L1689.6 80.2" stroke="#e2e2e2" stroke-width="2.7" stroke-linecap="round"/></svg>
<span class="t" style="left:21.64px;top:512.00px;font-size:14.2px;color:#000;-webkit-text-stroke:0.3px #000;transform:scaleX(0.9358);-webkit-text-stroke:0.1px #000;">C 1</span>
<span class="t" style="left:175.41px;top:407.00px;font-size:20.6px;color:#ff0c16;font-weight:bold;transform:scaleX(0.9042);-webkit-text-stroke:0.7px #ff0c16;">X</span>
<span class="t" style="left:1535.41px;top:407.00px;font-size:20.6px;color:#ff0c16;font-weight:bold;transform:scaleX(0.9042);-webkit-text-stroke:0.7px #ff0c16;">X</span>
<div class="a" style="left:1716px;top:940px;width:194px;height:130px;overflow:hidden;"><div class="a" style="left:78px;top:48px;width:108px;height:36px;background:#ff1a26;border:1px solid #5f8588;border-radius:6px;box-shadow:-6px 10px 34px 12px rgba(14,50,52,0.55);"></div></div>
<div class="badge" style="left:12px;top:989px;width:108px;height:79px;border-radius:5px;box-shadow:0 0 20px 5px rgba(14,14,34,0.5);"><div class="a" style="left:0;top:0;width:108px;height:19px;background:#ffff45;"></div><div class="a" style="left:0;top:19px;width:108px;height:2px;background:linear-gradient(180deg,#bebedb 0%,#c8c8e0 50%,#ececf6 100%);"></div></div>
<span class="t" style="left:17.17px;top:989.00px;font-size:18px;color:#000;-webkit-text-stroke:0.3px #000;transform:scaleX(0.9209);">Ch 1</span>
<span class="t" style="left:19.17px;top:1011.00px;font-size:18px;color:#000;-webkit-text-stroke:0.3px #000;transform:scaleX(1.0160);">500 mV/div</span>
<span class="t" style="left:18.88px;top:1050.00px;font-size:17.6px;color:#000;-webkit-text-stroke:0.3px #000;transform:scaleX(1.0505);">250 MHz</span>
<div class="cb" style="left:552px;top:988px;width:48px;height:79px;"></div>
<div class="a" style="left:560px;top:996px;width:32px;height:2px;background:#19f5f5;"></div>
<span class="t" style="left:569.48px;top:1019.00px;font-size:24px;color:#fff;-webkit-text-stroke:0.3px #fff;-webkit-text-stroke:0.55px #fff;">2</span>
<div class="cb" style="left:605px;top:988px;width:48px;height:79px;"></div>
<div class="a" style="left:613px;top:996px;width:32px;height:2px;background:#ff5080;"></div>
<span class="t" style="left:622.60px;top:1019.00px;font-size:24px;color:#fff;-webkit-text-stroke:0.3px #fff;-webkit-text-stroke:0.55px #fff;">3</span>
<div class="cb" style="left:658px;top:988px;width:48px;height:79px;"></div>
<div class="a" style="left:666px;top:996px;width:32px;height:2px;background:#b4f01e;"></div>
<span class="t" style="left:675.60px;top:1019.00px;font-size:24px;color:#fff;-webkit-text-stroke:0.3px #fff;-webkit-text-stroke:0.55px #fff;">4</span>
<div class="cb" style="left:711px;top:988px;width:48px;height:79px;"></div>
<div class="a" style="left:719px;top:996px;width:32px;height:2px;background:#ffb41e;"></div>
<span class="t" style="left:728.54px;top:1019.00px;font-size:24px;color:#fff;-webkit-text-stroke:0.3px #fff;-webkit-text-stroke:0.55px #fff;">5</span>
<div class="cb" style="left:764px;top:988px;width:48px;height:79px;"></div>
<div class="a" style="left:772px;top:996px;width:32px;height:2px;background:#2630ff;"></div>
<span class="t" style="left:781.42px;top:1019.00px;font-size:24px;color:#fff;-webkit-text-stroke:0.3px #fff;-webkit-text-stroke:0.55px #fff;">6</span>
<div class="sep" style="left:822px;"></div>
<div class="cb" style="left:833px;top:988px;width:48px;height:79px;"></div>
<div class="a" style="left:841px;top:996px;width:32px;height:2px;background:#ffb41e;"></div>
<span class="t" style="left:840.25px;top:1005.00px;font-size:17.5px;color:#fff;-webkit-text-stroke:0.3px #fff;transform:scaleX(1.0997);">Add</span>
<span class="t" style="left:836.98px;top:1024.00px;font-size:17.5px;color:#fff;-webkit-text-stroke:0.3px #fff;transform:scaleX(1.0865);">New</span>
<span class="t" style="left:833.75px;top:1042.00px;font-size:17.5px;color:#fff;-webkit-text-stroke:0.3px #fff;transform:scaleX(1.1758);">Math</span>
<div class="cb" style="left:886px;top:988px;width:48px;height:79px;"></div>
<div class="a" style="left:894px;top:996px;width:32px;height:2px;background:#ffffff;"></div>
<span class="t" style="left:893.25px;top:1005.00px;font-size:17.5px;color:#fff;-webkit-text-stroke:0.3px #fff;transform:scaleX(1.0997);">Add</span>
<span class="t" style="left:889.98px;top:1024.00px;font-size:17.5px;color:#fff;-webkit-text-stroke:0.3px #fff;transform:scaleX(1.0865);">New</span>
<span class="t" style="left:895.06px;top:1042.00px;font-size:17.5px;color:#fff;-webkit-text-stroke:0.3px #fff;transform:scaleX(1.0270);">Ref</span>
<div class="cb" style="left:939px;top:988px;width:48px;height:79px;"></div>
<div class="a" style="left:947px;top:996px;width:32px;height:2px;background:#ff74ff;"></div>
<span class="t" style="left:946.25px;top:1005.00px;font-size:17.5px;color:#fff;-webkit-text-stroke:0.3px #fff;transform:scaleX(1.0997);">Add</span>
<span class="t" style="left:942.98px;top:1024.00px;font-size:17.5px;color:#fff;-webkit-text-stroke:0.3px #fff;transform:scaleX(1.0865);">New</span>
<span class="t" style="left:947.74px;top:1042.00px;font-size:17.5px;color:#fff;-webkit-text-stroke:0.3px #fff;transform:scaleX(0.9725);">Bus</span>
<div class="sep" style="left:997px;"></div>
<div class="cb" style="left:1008px;top:988px;width:40px;height:79px;"></div>
<div class="cb" style="left:1058px;top:988px;width:48px;height:79px;"></div>
<div class="a" style="left:1012px;top:996px;width:32px;height:2px;background:#626262;"></div>
<div class="a" style="left:1066px;top:996px;width:32px;height:2px;background:#626262;"></div>
<span class="t" style="left:1010.02px;top:1024.00px;font-size:14.5px;color:#fff;-webkit-text-stroke:0.3px #fff;transform:scaleX(1.1055);">DVM</span>
<span class="t" style="left:1065.40px;top:1024.00px;font-size:17.7px;color:#fff;-webkit-text-stroke:0.3px #fff;transform:scaleX(0.9421);">AFG</span>
<div class="sep" style="left:1116px;"></div>
<div class="badge" style="left:1127px;top:988px;width:265px;height:79px;box-shadow:0 0 5px 2px rgba(10,10,20,0.5);"><div class="bh"></div></div>
<span class="t" style="left:1131.41px;top:988.00px;font-size:18px;color:#fff;-webkit-text-stroke:0.3px #fff;transform:scaleX(1.1009);">Horizontal</span>
<span class="t" style="left:1134.45px;top:1011.00px;font-size:17.3px;color:#000;-webkit-text-stroke:0.3px #000;transform:scaleX(1.0375);">100 ns/div</span>
<span class="t" style="left:1261.03px;top:1011.00px;font-size:17.3px;color:#000;-webkit-text-stroke:0.3px #000;transform:scaleX(0.9794);">1 µs</span>
<span class="t" style="left:1133.97px;top:1029.00px;font-size:17.3px;color:#000;-webkit-text-stroke:0.3px #000;transform:scaleX(0.9399);">SR: 6.25 GS/s</span>
<span class="t" style="left:1260.93px;top:1029.00px;font-size:17.3px;color:#000;-webkit-text-stroke:0.3px #000;transform:scaleX(1.0529);">160 ps/pt</span>
<span class="t" style="left:1133.27px;top:1048.00px;font-size:17.3px;color:#000;-webkit-text-stroke:0.3px #000;transform:scaleX(1.0350);">RL: 6.25 kpts</span>
<span class="t" style="left:1274.68px;top:1048.00px;font-size:17.3px;color:#000;-webkit-text-stroke:0.3px #000;transform:scaleX(1.0625);">20%</span>
<div class="badge" style="left:1402px;top:988px;width:192px;height:79px;box-shadow:0 0 5px 2px rgba(10,10,20,0.5);"><div class="bh"></div></div>
<span class="t" style="left:1407.22px;top:988.00px;font-size:18px;color:#fff;-webkit-text-stroke:0.3px #fff;transform:scaleX(1.0466);">Trigger</span>
<span class="t" style="left:1472.59px;top:988.00px;font-size:18px;color:#27f027;-webkit-text-stroke:0.3px #27f027;transform:scaleX(1.0309);-webkit-text-stroke:0.85px #27f027;">(Visual)</span>
<div class="a" style="left:1409px;top:1012px;width:36px;height:17px;background:#ffff36;border:1.4px solid #000;border-radius:7px;"></div>
<span class="t" style="left:1481.47px;top:1010.00px;font-size:17.3px;color:#000;-webkit-text-stroke:0.3px #000;transform:scaleX(1.0247);">1.64 V</span>
<div class="badge" style="left:1604px;top:988px;width:180px;height:79px;box-shadow:0 0 5px 2px rgba(10,10,20,0.5);"><div class="bh"></div></div>
<span class="t" style="left:1609.80px;top:988.00px;font-size:18px;color:#fff;-webkit-text-stroke:0.3px #fff;transform:scaleX(1.0739);">Acquisition</span>
<span class="t" style="left:1611.50px;top:1011.00px;font-size:17.3px;color:#000;-webkit-text-stroke:0.3px #000;transform:scaleX(1.1638);">Auto,</span>
<span class="t" style="left:1705.50px;top:1011.00px;font-size:17.3px;color:#000;-webkit-text-stroke:0.3px #000;transform:scaleX(1.0821);">Analyze</span>
<span class="t" style="left:1610.67px;top:1029.00px;font-size:17.3px;color:#000;-webkit-text-stroke:0.3px #000;transform:scaleX(1.0637);">Sample: 8 bits</span>
<span class="t" style="left:1610.69px;top:1048.00px;font-size:17.3px;color:#000;-webkit-text-stroke:0.3px #000;transform:scaleX(1.0419);">Single: 0 /1</span>
<span class="t" style="left:1819.03px;top:997.00px;font-size:16px;color:#fff;font-weight:bold;transform:scaleX(0.9358);">Preview</span>
<svg class="a" style="left:0;top:0" width="1920" height="1080" viewBox="0 0 1920 1080"><path d="M1455 1024.7 H1459.4 L1467.2 1015.5 H1471" stroke="#20208a" stroke-width="1.3" fill="none"/><path d="M1427.95 1012.9 V1024.8" stroke="#000" stroke-width="1.75" fill="none"/><path d="M1423.9 1015.0 L1427.6 1013.2" stroke="#000" stroke-width="1.3" fill="none"/><path d="M21.6 1041.5 V1038.5 Q22.2 1033.3 27.4 1033.1 Q32.6 1033.3 33.2 1038.5" stroke="#1a1a1a" stroke-width="1.35" fill="none"/><circle cx="27.1" cy="1036.3" r="2.6" stroke="#1a1a1a" stroke-width="1.3" fill="none"/><rect x="20.6" y="1038.6" width="2.2" height="4.4" rx="1" stroke="#333" stroke-width="0.9" fill="#ccc"/><rect x="31.2" y="1038.8" width="3.6" height="4.6" rx="0.6" stroke="#333" stroke-width="0.9" fill="#ccc"/><rect x="1261.4" y="1051.6" width="7.8" height="7.6" fill="#000" stroke="#ff9a14" stroke-width="1.2"/><path d="M1263.4 1059.6 L1265.3 1063.2 L1267.2 1059.6 Z" fill="#ff9a14"/><path d="M1263.1 1053.9 H1267.5 M1265.3 1053.9 V1057.8" stroke="#fff" stroke-width="1.4" fill="none"/></svg>
<span class="t" style="left:98.16px;top:1051.00px;font-size:9.5px;color:#000;-webkit-text-stroke:0.3px #000;transform:scaleX(1.1018);">B</span>
<span class="t" style="left:104.80px;top:1054.00px;font-size:8.5px;color:#000;-webkit-text-stroke:0.3px #000;transform:scaleX(0.9670);">w</span>
</div></body></html>
